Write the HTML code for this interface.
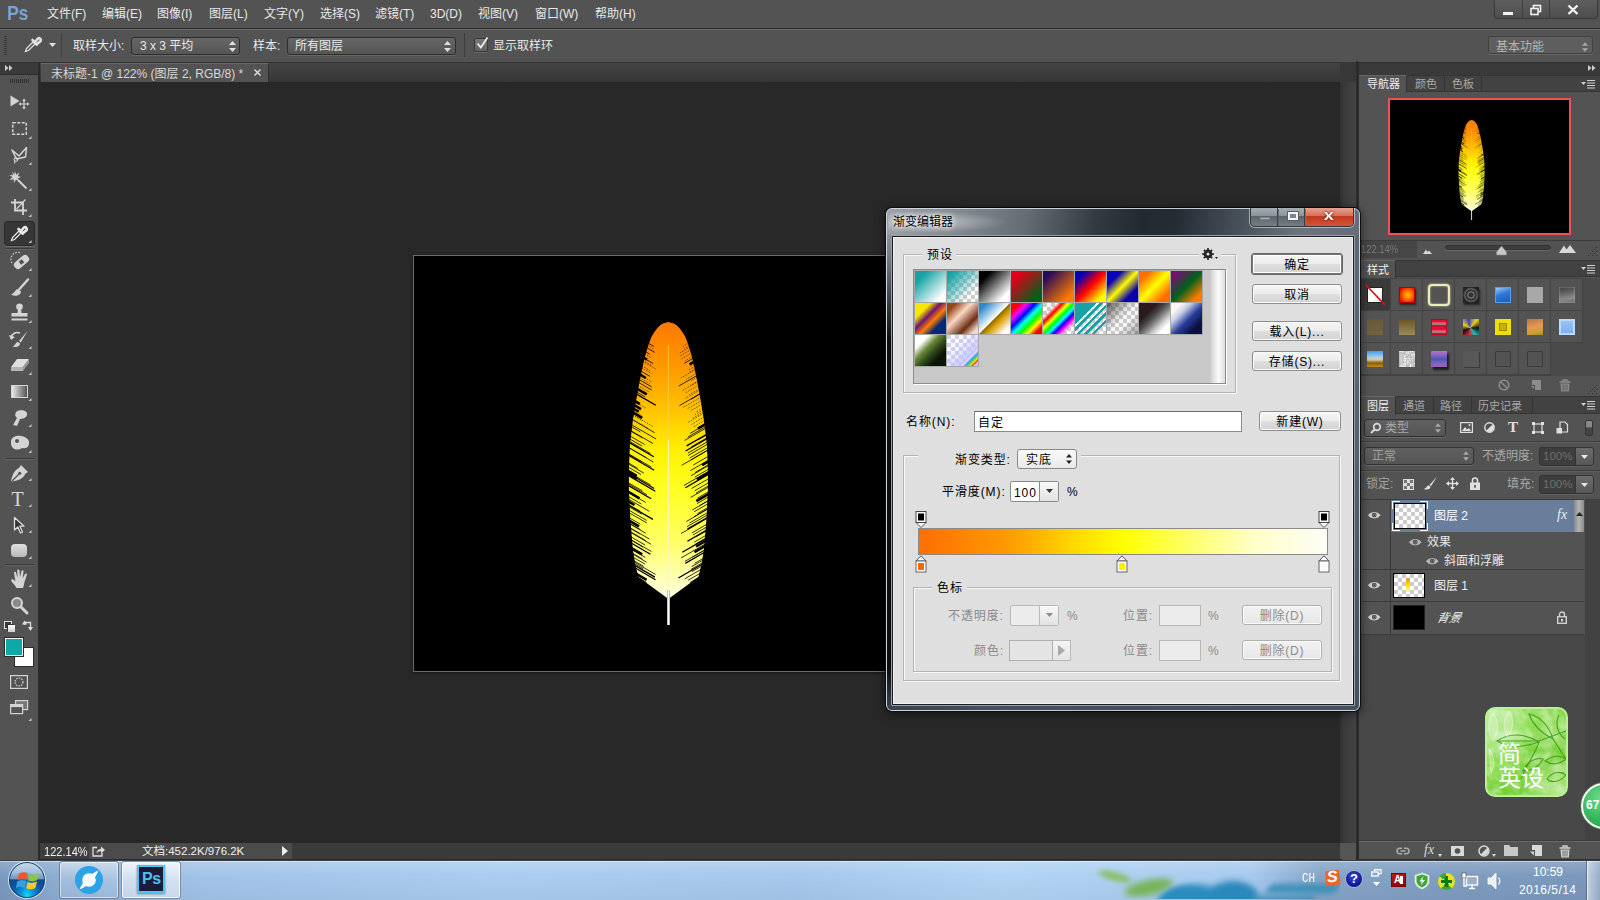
<!DOCTYPE html>
<html lang="zh-CN">
<head>
<meta charset="utf-8">
<title>Photoshop</title>
<style>
*{box-sizing:border-box;margin:0;padding:0}
html,body{width:1600px;height:900px;overflow:hidden;background:#535353}
body{position:relative;font-family:"Liberation Sans","Noto Sans CJK SC",sans-serif;font-size:12px;color:#e4e4e4}
.a{position:absolute}
.t{position:absolute;white-space:nowrap;line-height:1}
svg{position:absolute;overflow:visible}
/* ---------- top ---------- */
#menubar{left:0;top:0;width:1600px;height:29px;background:#535353;border-bottom:1px solid #2c2c2c}
#menubar .t{top:8px;font-size:12px;color:#e8e8e8;letter-spacing:0px}
#optbar{left:0;top:29px;width:1600px;height:34px;background:#535353;box-shadow:inset 0 1px 0 #6c6c6c;border-bottom:1px solid #333}
#tabrow{left:40px;top:63px;width:1302px;height:19px;background:linear-gradient(#444,#363636)}
#canvasbg{left:40px;top:82px;width:1302px;height:761px;background:#282828}
#statusbar{left:40px;top:841px;width:1300px;height:20px;background:#3e3e3e}
#toolbar{left:0;top:62px;width:39px;height:799px;background:#535353}
#rightcol{left:1342px;top:62px;width:258px;height:799px}
#taskbar{left:0;top:860px;width:1600px;height:40px;background:#a9cbee}
.dd{background:linear-gradient(#666,#555);border:1px solid #2e2e2e;border-radius:3px;box-shadow:0 1px 0 rgba(255,255,255,.12)}
.dd2{background:linear-gradient(#606060,#555);border:1px solid #333;border-radius:3px;box-shadow:0 1px 0 rgba(255,255,255,.12)}
.dt{letter-spacing:.9px}

</style>
</head>
<body>
<!-- ===== MENUBAR ===== -->
<div id="menubar" class="a">
<div class="t" style="left:7px;top:3px;font-size:20.5px;font-weight:bold;color:#79a3d3;letter-spacing:-0.5px;transform:scaleX(.87);transform-origin:0 0;font-family:'Liberation Sans',sans-serif">Ps</div>
<div class="t" style="left:47px">文件(F)</div>
<div class="t" style="left:102px">编辑(E)</div>
<div class="t" style="left:157px">图像(I)</div>
<div class="t" style="left:209px">图层(L)</div>
<div class="t" style="left:264px">文字(Y)</div>
<div class="t" style="left:320px">选择(S)</div>
<div class="t" style="left:375px">滤镜(T)</div>
<div class="t" style="left:430px">3D(D)</div>
<div class="t" style="left:478px">视图(V)</div>
<div class="t" style="left:535px">窗口(W)</div>
<div class="t" style="left:595px">帮助(H)</div>
<!-- window buttons -->
<div class="a" style="left:1494px;top:0;width:104px;height:19px;border:1px solid #3a3a3a;border-top:none;border-radius:0 0 4px 4px;background:linear-gradient(#5e5e5e,#4e4e4e)"></div>
<div class="a" style="left:1522px;top:0;width:1px;height:18px;background:#3e3e3e"></div>
<div class="a" style="left:1549px;top:0;width:1px;height:18px;background:#3e3e3e"></div>
<div class="a" style="left:1503px;top:12px;width:10px;height:3px;background:#f2f2f2"></div>
<svg style="left:1530px;top:4px" width="12" height="12" viewBox="0 0 12 12"><rect x="3.5" y="1.5" width="7" height="6" fill="none" stroke="#f2f2f2" stroke-width="1.6"/><rect x="1" y="4.5" width="7" height="6" fill="#555" stroke="#f2f2f2" stroke-width="1.6"/></svg>
<svg style="left:1567px;top:4px" width="12" height="12" viewBox="0 0 12 12"><path d="M1.5 1.5L10.5 10M10.5 1.5L1.5 10" stroke="#f2f2f2" stroke-width="2.4"/></svg>

</div>
<!-- ===== OPTIONS BAR ===== -->
<div id="optbar" class="a">
<!-- grip -->
<div class="a" style="left:4px;top:7px;width:3px;height:20px;background:repeating-linear-gradient(#3a3a3a 0 1px,transparent 1px 2px)"></div>
<!-- eyedropper icon -->
<svg style="left:24px;top:6px" width="18" height="18" viewBox="0 0 18 18"><path d="M1.5 16.5L2.5 13.5L9 7L11 9L4.5 15.5Z" fill="none" stroke="#e0e0e0" stroke-width="1.3"/><path d="M8.5 5L13 9.5M10.5 7.5L14 3.5a1.9 1.9 0 0 1 2.6 2.6L12.5 9.5" stroke="#e0e0e0" stroke-width="2.6" stroke-linecap="round" fill="none"/></svg>
<svg style="left:49px;top:14px" width="7" height="4" viewBox="0 0 7 4"><path d="M0 0H7L3.5 4Z" fill="#e0e0e0"/></svg>
<div class="a" style="left:61px;top:4px;width:1px;height:24px;background:#3e3e3e"></div>
<div class="t" style="left:73px;top:11px;font-size:12px;color:#e8e8e8">取样大小:</div>
<div class="a dd" style="left:131px;top:8px;width:109px;height:18px"></div>
<div class="t" style="left:140px;top:11px;font-size:12px;color:#e8e8e8">3 x 3 平均</div>
<svg style="left:229px;top:12px" width="7" height="11" viewBox="0 0 7 11"><path d="M0 4L3.5 0L7 4ZM0 7L3.5 11L7 7Z" fill="#e0e0e0"/></svg>
<div class="t" style="left:253px;top:11px;font-size:12px;color:#e8e8e8">样本:</div>
<div class="a dd" style="left:287px;top:8px;width:169px;height:18px"></div>
<div class="t" style="left:295px;top:11px;font-size:12px;color:#e8e8e8">所有图层</div>
<svg style="left:444px;top:12px" width="7" height="11" viewBox="0 0 7 11"><path d="M0 4L3.5 0L7 4ZM0 7L3.5 11L7 7Z" fill="#e0e0e0"/></svg>
<div class="a" style="left:464px;top:4px;width:1px;height:24px;background:#3e3e3e"></div>
<div class="a" style="left:474px;top:9px;width:14px;height:14px;background:linear-gradient(#787878,#626262);border:1px solid #383838;border-radius:2px;box-shadow:0 1px 0 rgba(255,255,255,.12)"></div>
<svg style="left:476px;top:7px" width="13" height="14" viewBox="0 0 13 14"><path d="M1.500 7.500L4.800 11.500L11.500 1.500" stroke="#ececec" stroke-width="1.800" fill="none"/></svg>
<div class="t" style="left:493px;top:11px;font-size:12px;color:#e8e8e8">显示取样环</div>
<!-- workspace -->
<div class="a dd" style="left:1488px;top:7px;width:105px;height:18px;background:#5e5e5e;border-color:#414141"></div>
<div class="t" style="left:1496px;top:12px;font-size:12px;color:#b4b4b4">基本功能</div>
<svg style="left:1582px;top:13px" width="6" height="10" viewBox="0 0 7 11"><path d="M0 4L3.5 0L7 4ZM0 7L3.5 11L7 7Z" fill="#a8a8a8"/></svg>

</div>
<!-- ===== TAB ROW ===== -->
<div id="tabrow" class="a">
<div class="a" style="left:1px;top:0;width:228px;height:19px;background:#535353;border-top:1px solid #6a6a6a;border-right:1px solid #303030"></div>
<div class="t" style="left:11px;top:5px;font-size:12px;color:#d8d8d8">未标题-1 @ 122% (图层 2, RGB/8) *</div>
<svg style="left:214px;top:6px" width="7" height="7" viewBox="0 0 7 7"><path d="M0.5 0.5L6.5 6.5M6.5 0.5L0.5 6.5" stroke="#e0e0e0" stroke-width="1.4"/></svg>

</div>
<!-- ===== CANVAS ===== -->
<div id="canvasbg" class="a">
<!-- document -->
<div class="a" style="left:373px;top:173px;width:500px;height:417px;background:#000;border:1px solid #6a6a6a;box-shadow:0 1px 3px rgba(0,0,0,.5)"></div>
<svg style="left:-40px;top:-82px" width="1600" height="900" viewBox="0 0 1600 900">
<defs><linearGradient id="fg" gradientUnits="userSpaceOnUse" x1="0" y1="322" x2="0" y2="600"><stop offset="0" stop-color="#ff7800"/><stop offset="0.15" stop-color="#ff9600"/><stop offset="0.32" stop-color="#ffc400"/><stop offset="0.46" stop-color="#fff000"/><stop offset="0.6" stop-color="#ffff20"/><stop offset="0.78" stop-color="#ffff60"/><stop offset="0.9" stop-color="#ffffa8"/><stop offset="1" stop-color="#ffffe8"/></linearGradient>
<linearGradient id="qg" x1="0" x2="1" y1="0" y2="0"><stop offset="0" stop-color="#a8a898"/><stop offset="0.5" stop-color="#ffffff"/><stop offset="1" stop-color="#989888"/></linearGradient>
<clipPath id="fc"><path d="M668.4 322.0 L668.4 322.0 L673.8 323.5 L676.4 325.0 L677.9 326.5 L679.4 328.0 L680.5 329.5 L681.6 331.0 L682.7 332.5 L683.6 334.0 L684.5 335.5 L685.4 337.0 L686.0 338.5 L686.5 340.0 L687.1 341.5 L687.6 343.0 L688.2 344.5 L688.7 346.0 L689.1 347.5 L689.6 349.0 L690.0 350.5 L690.5 352.0 L690.9 353.5 L691.4 355.0 L691.8 356.5 L692.1 358.0 L692.5 359.5 L692.9 361.0 L693.3 362.5 L693.6 364.0 L693.9 365.5 L694.2 367.0 L694.5 368.5 L694.8 370.0 L695.1 371.5 L695.5 373.0 L695.8 374.5 L696.1 376.0 L696.4 377.5 L696.7 379.0 L697.0 380.5 L697.3 382.0 L697.5 383.5 L697.8 385.0 L698.1 386.5 L698.4 388.0 L698.6 389.5 L698.9 391.0 L699.2 392.5 L699.5 394.0 L699.8 395.5 L700.0 397.0 L700.3 398.5 L700.6 400.0 L700.8 401.5 L701.1 403.0 L701.3 404.5 L701.6 406.0 L701.8 407.5 L702.1 409.0 L702.3 410.5 L702.6 412.0 L702.8 413.5 L703.1 415.0 L703.3 416.5 L703.6 418.0 L703.8 419.5 L704.0 421.0 L704.2 422.5 L704.4 424.0 L704.6 425.5 L704.7 427.0 L704.9 428.5 L705.1 430.0 L705.3 431.5 L705.5 433.0 L705.6 434.5 L705.8 436.0 L706.0 437.5 L706.2 439.0 L706.4 440.5 L706.5 442.0 L706.7 443.5 L706.9 445.0 L707.0 446.5 L707.0 448.0 L707.1 449.5 L707.1 451.0 L707.2 452.5 L707.3 454.0 L707.3 455.5 L707.4 457.0 L707.4 458.5 L707.5 460.0 L707.6 461.5 L707.6 463.0 L707.7 464.5 L707.7 466.0 L707.8 467.5 L707.9 469.0 L707.9 470.5 L707.9 472.0 L707.9 473.5 L707.9 475.0 L707.9 476.5 L707.9 478.0 L707.9 479.5 L707.9 481.0 L707.9 482.5 L707.9 484.0 L707.9 485.5 L707.9 487.0 L707.9 488.5 L707.9 490.0 L707.8 491.5 L707.8 493.0 L707.7 494.5 L707.6 496.0 L707.5 497.5 L707.4 499.0 L707.4 500.5 L707.3 502.0 L707.2 503.5 L707.1 505.0 L707.1 506.5 L707.0 508.0 L706.9 509.5 L706.9 511.0 L706.8 512.5 L706.7 514.0 L706.6 515.5 L706.5 517.0 L706.5 518.5 L706.4 520.0 L706.3 521.5 L706.1 523.0 L706.0 524.5 L705.9 526.0 L705.8 527.5 L705.6 529.0 L705.5 530.5 L705.4 532.0 L705.3 533.5 L705.1 535.0 L705.0 536.5 L704.9 538.0 L704.8 539.5 L704.6 541.0 L704.5 542.5 L704.4 544.0 L704.3 545.5 L704.1 547.0 L704.0 548.5 L703.9 550.0 L703.6 551.5 L703.4 553.0 L703.1 554.5 L702.9 556.0 L702.6 557.5 L702.4 559.0 L702.1 560.5 L701.9 562.0 L701.6 563.5 L701.4 565.0 L701.0 566.5 L700.6 568.0 L700.3 569.5 L699.9 571.0 L699.5 572.5 L699.1 574.0 L698.8 575.5 L698.4 577.0 L669.7 598.0 L667.1 598.0 L638.4 577.0 L638.0 575.5 L637.6 574.0 L637.3 572.5 L636.9 571.0 L636.5 569.5 L636.1 568.0 L635.8 566.5 L635.4 565.0 L635.1 563.5 L634.9 562.0 L634.6 560.5 L634.4 559.0 L634.1 557.5 L633.9 556.0 L633.6 554.5 L633.4 553.0 L633.1 551.5 L632.9 550.0 L632.8 548.5 L632.6 547.0 L632.5 545.5 L632.4 544.0 L632.3 542.5 L632.1 541.0 L632.0 539.5 L631.9 538.0 L631.8 536.5 L631.6 535.0 L631.5 533.5 L631.4 532.0 L631.3 530.5 L631.1 529.0 L631.0 527.5 L630.9 526.0 L630.8 524.5 L630.6 523.0 L630.5 521.5 L630.4 520.0 L630.3 518.5 L630.2 517.0 L630.2 515.5 L630.1 514.0 L630.0 512.5 L629.9 511.0 L629.9 509.5 L629.8 508.0 L629.7 506.5 L629.6 505.0 L629.6 503.5 L629.5 502.0 L629.4 500.5 L629.4 499.0 L629.3 497.5 L629.2 496.0 L629.1 494.5 L629.0 493.0 L629.0 491.5 L628.9 490.0 L628.9 488.5 L628.9 487.0 L628.9 485.5 L628.9 484.0 L628.9 482.5 L628.9 481.0 L628.9 479.5 L628.9 478.0 L628.9 476.5 L628.9 475.0 L628.9 473.5 L628.9 472.0 L628.9 470.5 L628.9 469.0 L629.0 467.5 L629.1 466.0 L629.1 464.5 L629.2 463.0 L629.2 461.5 L629.3 460.0 L629.4 458.5 L629.4 457.0 L629.5 455.5 L629.5 454.0 L629.6 452.5 L629.7 451.0 L629.7 449.5 L629.8 448.0 L629.8 446.5 L629.9 445.0 L630.1 443.5 L630.3 442.0 L630.4 440.5 L630.6 439.0 L630.8 437.5 L631.0 436.0 L631.2 434.5 L631.3 433.0 L631.5 431.5 L631.7 430.0 L631.9 428.5 L632.1 427.0 L632.2 425.5 L632.4 424.0 L632.6 422.5 L632.8 421.0 L633.0 419.5 L633.2 418.0 L633.5 416.5 L633.7 415.0 L634.0 413.5 L634.2 412.0 L634.5 410.5 L634.7 409.0 L635.0 407.5 L635.2 406.0 L635.5 404.5 L635.7 403.0 L636.0 401.5 L636.2 400.0 L636.5 398.5 L636.8 397.0 L637.0 395.5 L637.3 394.0 L637.6 392.5 L637.9 391.0 L638.1 389.5 L638.4 388.0 L638.7 386.5 L639.0 385.0 L639.3 383.5 L639.5 382.0 L639.8 380.5 L640.1 379.0 L640.4 377.5 L640.7 376.0 L641.0 374.5 L641.3 373.0 L641.6 371.5 L642.0 370.0 L642.3 368.5 L642.6 367.0 L642.9 365.5 L643.2 364.0 L643.5 362.5 L643.9 361.0 L644.3 359.5 L644.6 358.0 L645.0 356.5 L645.4 355.0 L645.9 353.5 L646.3 352.0 L646.8 350.5 L647.2 349.0 L647.6 347.5 L648.1 346.0 L648.6 344.5 L649.1 343.0 L649.7 341.5 L650.3 340.0 L650.8 338.5 L651.4 337.0 L652.3 335.5 L653.2 334.0 L654.1 332.5 L655.1 331.0 L656.3 329.5 L657.4 328.0 L658.9 326.5 L660.4 325.0 L663.0 323.5 L668.4 322.0Z"/></clipPath></defs>
<g id="fthr"><path d="M668.4 322.0 L668.4 322.0 L673.8 323.5 L676.4 325.0 L677.9 326.5 L679.4 328.0 L680.5 329.5 L681.6 331.0 L682.7 332.5 L683.6 334.0 L684.5 335.5 L685.4 337.0 L686.0 338.5 L686.5 340.0 L687.1 341.5 L687.6 343.0 L688.2 344.5 L688.7 346.0 L689.1 347.5 L689.6 349.0 L690.0 350.5 L690.5 352.0 L690.9 353.5 L691.4 355.0 L691.8 356.5 L692.1 358.0 L692.5 359.5 L692.9 361.0 L693.3 362.5 L693.6 364.0 L693.9 365.5 L694.2 367.0 L694.5 368.5 L694.8 370.0 L695.1 371.5 L695.5 373.0 L695.8 374.5 L696.1 376.0 L696.4 377.5 L696.7 379.0 L697.0 380.5 L697.3 382.0 L697.5 383.5 L697.8 385.0 L698.1 386.5 L698.4 388.0 L698.6 389.5 L698.9 391.0 L699.2 392.5 L699.5 394.0 L699.8 395.5 L700.0 397.0 L700.3 398.5 L700.6 400.0 L700.8 401.5 L701.1 403.0 L701.3 404.5 L701.6 406.0 L701.8 407.5 L702.1 409.0 L702.3 410.5 L702.6 412.0 L702.8 413.5 L703.1 415.0 L703.3 416.5 L703.6 418.0 L703.8 419.5 L704.0 421.0 L704.2 422.5 L704.4 424.0 L704.6 425.5 L704.7 427.0 L704.9 428.5 L705.1 430.0 L705.3 431.5 L705.5 433.0 L705.6 434.5 L705.8 436.0 L706.0 437.5 L706.2 439.0 L706.4 440.5 L706.5 442.0 L706.7 443.5 L706.9 445.0 L707.0 446.5 L707.0 448.0 L707.1 449.5 L707.1 451.0 L707.2 452.5 L707.3 454.0 L707.3 455.5 L707.4 457.0 L707.4 458.5 L707.5 460.0 L707.6 461.5 L707.6 463.0 L707.7 464.5 L707.7 466.0 L707.8 467.5 L707.9 469.0 L707.9 470.5 L707.9 472.0 L707.9 473.5 L707.9 475.0 L707.9 476.5 L707.9 478.0 L707.9 479.5 L707.9 481.0 L707.9 482.5 L707.9 484.0 L707.9 485.5 L707.9 487.0 L707.9 488.5 L707.9 490.0 L707.8 491.5 L707.8 493.0 L707.7 494.5 L707.6 496.0 L707.5 497.5 L707.4 499.0 L707.4 500.5 L707.3 502.0 L707.2 503.5 L707.1 505.0 L707.1 506.5 L707.0 508.0 L706.9 509.5 L706.9 511.0 L706.8 512.5 L706.7 514.0 L706.6 515.5 L706.5 517.0 L706.5 518.5 L706.4 520.0 L706.3 521.5 L706.1 523.0 L706.0 524.5 L705.9 526.0 L705.8 527.5 L705.6 529.0 L705.5 530.5 L705.4 532.0 L705.3 533.5 L705.1 535.0 L705.0 536.5 L704.9 538.0 L704.8 539.5 L704.6 541.0 L704.5 542.5 L704.4 544.0 L704.3 545.5 L704.1 547.0 L704.0 548.5 L703.9 550.0 L703.6 551.5 L703.4 553.0 L703.1 554.5 L702.9 556.0 L702.6 557.5 L702.4 559.0 L702.1 560.5 L701.9 562.0 L701.6 563.5 L701.4 565.0 L701.0 566.5 L700.6 568.0 L700.3 569.5 L699.9 571.0 L699.5 572.5 L699.1 574.0 L698.8 575.5 L698.4 577.0 L669.7 598.0 L667.1 598.0 L638.4 577.0 L638.0 575.5 L637.6 574.0 L637.3 572.5 L636.9 571.0 L636.5 569.5 L636.1 568.0 L635.8 566.5 L635.4 565.0 L635.1 563.5 L634.9 562.0 L634.6 560.5 L634.4 559.0 L634.1 557.5 L633.9 556.0 L633.6 554.5 L633.4 553.0 L633.1 551.5 L632.9 550.0 L632.8 548.5 L632.6 547.0 L632.5 545.5 L632.4 544.0 L632.3 542.5 L632.1 541.0 L632.0 539.5 L631.9 538.0 L631.8 536.5 L631.6 535.0 L631.5 533.5 L631.4 532.0 L631.3 530.5 L631.1 529.0 L631.0 527.5 L630.9 526.0 L630.8 524.5 L630.6 523.0 L630.5 521.5 L630.4 520.0 L630.3 518.5 L630.2 517.0 L630.2 515.5 L630.1 514.0 L630.0 512.5 L629.9 511.0 L629.9 509.5 L629.8 508.0 L629.7 506.5 L629.6 505.0 L629.6 503.5 L629.5 502.0 L629.4 500.5 L629.4 499.0 L629.3 497.5 L629.2 496.0 L629.1 494.5 L629.0 493.0 L629.0 491.5 L628.9 490.0 L628.9 488.5 L628.9 487.0 L628.9 485.5 L628.9 484.0 L628.9 482.5 L628.9 481.0 L628.9 479.5 L628.9 478.0 L628.9 476.5 L628.9 475.0 L628.9 473.5 L628.9 472.0 L628.9 470.5 L628.9 469.0 L629.0 467.5 L629.1 466.0 L629.1 464.5 L629.2 463.0 L629.2 461.5 L629.3 460.0 L629.4 458.5 L629.4 457.0 L629.5 455.5 L629.5 454.0 L629.6 452.5 L629.7 451.0 L629.7 449.5 L629.8 448.0 L629.8 446.5 L629.9 445.0 L630.1 443.5 L630.3 442.0 L630.4 440.5 L630.6 439.0 L630.8 437.5 L631.0 436.0 L631.2 434.5 L631.3 433.0 L631.5 431.5 L631.7 430.0 L631.9 428.5 L632.1 427.0 L632.2 425.5 L632.4 424.0 L632.6 422.5 L632.8 421.0 L633.0 419.5 L633.2 418.0 L633.5 416.5 L633.7 415.0 L634.0 413.5 L634.2 412.0 L634.5 410.5 L634.7 409.0 L635.0 407.5 L635.2 406.0 L635.5 404.5 L635.7 403.0 L636.0 401.5 L636.2 400.0 L636.5 398.5 L636.8 397.0 L637.0 395.5 L637.3 394.0 L637.6 392.5 L637.9 391.0 L638.1 389.5 L638.4 388.0 L638.7 386.5 L639.0 385.0 L639.3 383.5 L639.5 382.0 L639.8 380.5 L640.1 379.0 L640.4 377.5 L640.7 376.0 L641.0 374.5 L641.3 373.0 L641.6 371.5 L642.0 370.0 L642.3 368.5 L642.6 367.0 L642.9 365.5 L643.2 364.0 L643.5 362.5 L643.9 361.0 L644.3 359.5 L644.6 358.0 L645.0 356.5 L645.4 355.0 L645.9 353.5 L646.3 352.0 L646.8 350.5 L647.2 349.0 L647.6 347.5 L648.1 346.0 L648.6 344.5 L649.1 343.0 L649.7 341.5 L650.3 340.0 L650.8 338.5 L651.4 337.0 L652.3 335.5 L653.2 334.0 L654.1 332.5 L655.1 331.0 L656.3 329.5 L657.4 328.0 L658.9 326.5 L660.4 325.0 L663.0 323.5 L668.4 322.0Z" fill="url(#fg)"/>
<path d="M645.4 341.5L653.8 346.4M643.8 346.0L654.7 352.4M642.9 350.3L649.7 354.2M640.9 356.4L653.2 363.6M695.9 356.6L684.3 363.4M638.1 369.4L650.2 376.5M700.1 373.7L678.7 386.1M636.2 377.9L651.7 386.9M635.7 380.8L651.7 390.1M634.2 390.5L645.1 396.8M703.0 392.4L690.8 399.4M703.6 391.6L679.3 405.7M629.1 417.8L654.7 432.7M628.8 425.1L640.3 431.8M708.0 423.0L690.0 433.5M628.4 422.9L656.1 439.0M708.4 425.1L687.8 437.1M628.1 429.6L642.4 437.9M708.7 426.5L684.7 440.4M627.8 428.9L653.1 443.6M709.0 433.6L698.2 439.8M627.4 434.5L644.7 444.5M627.1 437.4L642.1 446.1M709.7 436.3L691.1 447.1M626.9 441.1L638.0 447.5M626.8 439.8L650.4 453.5M710.0 440.2L687.9 453.1M710.1 442.7L688.1 455.5M626.6 446.3L646.5 457.8M710.2 446.1L689.8 458.0M626.5 446.4L653.3 462.0M710.3 448.6L690.5 460.2M626.4 453.0L641.6 461.8M710.4 448.7L681.7 465.3M626.2 452.5L651.4 467.1M710.6 455.0L693.3 465.0M626.1 461.6L637.8 468.4M710.7 458.8L690.3 470.7M625.9 462.6L643.9 473.1M710.9 463.3L695.0 472.5M625.9 465.8L641.0 474.5M710.9 464.2L690.9 475.8M710.9 467.8L694.7 477.2M625.9 470.6L650.7 485.0M710.9 469.9L683.9 485.5M710.9 477.4L691.6 488.5M625.9 481.3L642.5 490.9M710.9 481.4L694.7 490.8M625.9 482.5L646.9 494.7M710.9 484.5L696.0 493.1M710.8 485.8L690.7 497.4M710.6 490.5L697.4 498.2M626.3 491.2L645.9 502.5M626.4 495.3L641.3 504.0M710.4 495.8L697.0 503.6M710.2 499.4L699.3 505.8M626.7 498.2L649.3 511.3M710.1 499.7L692.3 510.0M626.8 503.5L640.0 511.1M710.0 502.6L694.1 511.8M627.0 505.6L641.6 514.1M709.8 506.4L697.6 513.5M709.7 507.6L693.9 516.8M627.2 509.2L646.6 520.4M709.6 508.0L686.4 521.5M627.3 511.7L646.7 522.9M709.5 511.5L689.4 523.1M627.5 516.8L640.4 524.2M709.3 513.8L687.0 526.7M628.0 522.3L640.4 529.5M708.8 517.5L681.1 533.5M628.2 523.0L645.7 533.2M708.6 523.2L691.8 533.0M628.4 527.3L639.8 533.9M708.4 526.0L692.9 535.0M628.6 527.0L649.4 539.0M708.2 529.8L696.3 536.7M628.8 530.7L645.3 540.3M629.0 531.5L651.1 544.3M707.8 534.3L694.3 542.1M629.2 535.9L645.2 545.1M707.6 537.1L695.5 544.1M629.4 539.2L643.0 547.1M629.6 538.9L651.4 551.5M706.6 543.2L681.1 557.9M630.6 548.9L645.3 557.4M706.2 549.2L692.5 557.2M631.0 552.3L642.5 559.0M705.8 549.3L684.9 561.4M631.4 553.3L646.6 562.2M631.8 556.5L644.9 564.1M705.0 557.4L694.6 563.4M632.3 559.7L643.6 566.3M704.5 559.2L691.6 566.7M632.9 562.7L643.2 568.7M703.9 561.9L690.8 569.5M633.5 561.6L655.6 574.5M703.3 565.1L691.9 571.7M701.9 568.9L684.8 578.8M701.4 572.6L687.9 580.4M635.4 575.9L646.5 582.3M701.4 575.8L690.1 582.4M635.4 578.6L646.4 585.0" stroke="#000" stroke-width="0.8" fill="none"/>
<path d="M633.2 392.1L655.8 405.2M709.4 432.7L686.6 445.9M709.9 436.9L685.6 451.0M626.7 441.1L653.8 456.8M626.2 454.0L654.2 470.2M625.9 472.0L654.2 488.5M710.9 472.9L685.4 487.7M625.9 474.1L655.3 491.2M626.0 484.1L651.2 498.7M627.1 504.4L652.9 519.4M709.0 516.5L687.4 529.1M708.0 529.4L687.4 541.3M707.2 537.9L682.3 552.3M629.9 542.3L650.4 554.2M705.4 551.8L685.3 563.4M634.3 565.1L654.9 577.1M702.5 564.0L678.4 578.0M634.9 567.7L655.5 579.7" stroke="#000" stroke-width="1.3" fill="none"/>
<path d="M641.4 356.3L647.0 359.6M696.5 360.4L689.6 364.3M637.6 373.2L645.8 378.0M634.7 387.4L646.8 394.4M632.7 399.9L639.8 404.0M632.0 403.9L641.0 409.2M631.5 407.5L638.7 411.7M630.6 411.1L642.2 417.8M707.7 422.9L697.8 428.6M710.6 460.2L702.1 465.2M625.9 469.6L636.7 475.8M625.9 472.3L637.0 478.7M710.9 471.3L696.8 479.5M626.2 490.5L639.5 498.3M710.5 492.9L696.3 501.1M626.6 500.4L634.5 505.0M627.8 519.9L639.0 526.4M707.4 539.9L696.1 546.5M706.9 544.9L694.5 552.1M630.2 547.5L642.2 554.4M635.4 573.3L646.6 579.8M701.4 578.9L691.2 584.8" stroke="#000" stroke-width="2.6" fill="none"/>
<path d="M691.4 341.6L683.2 346.4M644.7 343.7L653.6 348.9M692.1 344.2L684.5 348.6M693.0 345.3L679.8 353.0M693.9 347.9L679.6 356.2M642.1 352.3L651.8 358.0M694.7 351.2L681.4 358.9M695.4 354.8L684.9 360.8M640.3 358.8L651.9 365.6M639.9 359.8L655.7 368.9M696.9 362.5L689.8 366.7M639.2 364.4L650.1 370.7M697.6 364.7L687.8 370.4M638.8 366.2L651.3 373.5M698.0 367.2L688.7 372.6M698.7 367.6L680.9 378.0M699.2 371.7L686.3 379.2M637.1 373.5L652.0 382.2M699.7 375.5L691.0 380.6M636.7 376.3L649.9 383.9M700.6 379.6L690.4 385.5M701.1 379.8L681.9 390.9M635.2 383.9L649.8 392.4M701.6 383.5L685.7 392.7M702.1 387.1L689.3 394.6M702.6 388.4L685.1 398.6M633.8 392.3L646.0 399.4M704.1 395.4L682.7 407.7M632.4 400.2L645.7 408.0M704.4 399.0L687.1 409.0M704.8 402.5L691.2 410.4M705.3 406.6L695.4 412.4M631.1 409.0L641.5 415.1M705.7 408.5L693.7 415.5M706.2 410.4L692.2 418.5M630.2 413.4L643.0 420.8M706.6 411.6L688.1 422.3M629.8 413.0L652.8 426.4M707.0 415.4L691.5 424.4M629.4 417.3L648.0 428.1M707.4 418.8L693.5 426.9" stroke="#000" stroke-width="0.9" stroke-dasharray="1.6 1.2" opacity="0.6" fill="none"/>
<path d="M668.4 345L668.4 598" stroke="#ffd84a" stroke-width="0.9" opacity="0.75"/>
<path d="M668.4 440L668.4 598" stroke="#fffbd0" stroke-width="1.2" opacity="0.8"/>
<rect x="667.0" y="590" width="3" height="35" fill="url(#qg)"/>
</g></svg>
<!-- right scroll gutter -->
<div class="a" style="left:1300px;top:0;width:16px;height:761px;background:linear-gradient(90deg,#303030,#3a3a3a 25%,#434343)"></div>
<div class="a" style="left:1300px;top:-20px;width:16px;height:20px;background:#383838"></div>
<div class="a" style="left:1300px;top:761px;width:16px;height:16px;background:#555"></div>
<div class="a" style="left:1316px;top:-21px;width:2px;height:800px;background:#2b2b2b"></div>

</div>
<div id="statusbar" class="a">
<div class="a" style="left:0;top:0;width:1300px;height:2px;background:#282828"></div>
<div class="a" style="left:0;top:2px;width:49px;height:16px;background:#3e3e3e"></div>
<div class="a" style="left:49px;top:2px;width:203px;height:16px;background:#4b4b4b"></div>
<div class="a" style="left:252px;top:2px;width:1048px;height:16px;background:#3a3a3a"></div>
<div class="a" style="left:0;top:18px;width:1302px;height:2px;background:#2a2a2a"></div>
<div class="t" style="left:4px;top:5px;font-size:12px;transform:scaleX(.92);transform-origin:0 0;color:#f0f0f0">122.14%</div>
<svg style="left:52px;top:4px" width="14" height="12" viewBox="0 0 14 12"><path d="M5 2.5H1V11H10V8" fill="none" stroke="#ddd" stroke-width="1.3"/><path d="M4.5 8.5C4.5 5.5 6.5 4 9 4V1.5L13 5L9 8.5V6.2C7 6.2 5.5 6.8 4.5 8.5Z" fill="#ddd"/></svg>
<div class="t" style="left:102px;top:5px;font-size:11.5px;color:#f0f0f0">文档:452.2K/976.2K</div>
<svg style="left:242px;top:5px" width="6" height="10" viewBox="0 0 6 10"><path d="M0 0L6 5L0 10Z" fill="#eee"/></svg>

</div>
<!-- ===== TOOLBAR ===== -->
<div id="toolbar" class="a">
<!-- header -->
<div class="a" style="left:0;top:0;width:38px;height:13px;background:#3a3a3a;border-top:1px solid #333;border-bottom:1px solid #2e2e2e"></div>
<svg style="left:5px;top:3px" width="8" height="6" viewBox="0 0 8 6"><path d="M0 0L3.5 3L0 6ZM4 0L7.5 3L4 6Z" fill="#cfcfcf"/></svg>
<div class="a" style="left:10px;top:17px;width:19px;height:4px;background:repeating-linear-gradient(90deg,#303030 0 1px,transparent 1px 2px)"></div>
<div class="a" style="left:38px;top:0;width:2px;height:799px;background:#2b2b2b"></div>
<!-- selected tool -->
<div class="a" style="left:4px;top:159px;width:31px;height:25px;background:#363636;border:1px solid #2a2a2a;border-radius:3px;box-shadow:0 1px 0 rgba(255,255,255,.15)"></div>
<!-- separators -->
<div class="a" style="left:5px;top:186px;width:29px;height:1px;background:#3a3a3a;box-shadow:0 1px 0 #626262"></div>
<div class="a" style="left:5px;top:396px;width:29px;height:1px;background:#3a3a3a;box-shadow:0 1px 0 #626262"></div>
<div class="a" style="left:5px;top:502px;width:29px;height:1px;background:#3a3a3a;box-shadow:0 1px 0 #626262"></div>
<!-- move -->
<svg style="left:10px;top:33px" width="20" height="16" viewBox="0 0 20 16"><path d="M0.500 0.500V11.500L9.500 6Z" fill="#d4d4d4"/><path d="M14 5V13M10 9H18" stroke="#d4d4d4" stroke-width="1.200"/><path d="M14 3.500L12.200 6H15.800ZM14 14.500L12.200 12H15.800ZM8.500 9L11 7.200V10.800ZM19.500 9L17 7.200V10.800Z" fill="#d4d4d4"/></svg>
<!-- marquee -->
<svg style="left:12px;top:60px" width="15" height="13" viewBox="0 0 15 13"><rect x="0.75" y="0.75" width="13.5" height="11.5" fill="none" stroke="#d4d4d4" stroke-width="1.5" stroke-dasharray="3 1.5"/></svg>
<!-- lasso -->
<svg style="left:10px;top:84px" width="20" height="18" viewBox="0 0 20 18"><path d="M2 4L9 10L16.500 1.500L15.500 11L6.500 13Z" fill="none" stroke="#d4d4d4" stroke-width="1.500" stroke-linejoin="round"/><circle cx="6" cy="13.500" r="1.800" fill="none" stroke="#d4d4d4" stroke-width="1.100"/><path d="M5 15L4.500 17.500" stroke="#d4d4d4" stroke-width="1.100"/></svg>
<!-- wand -->
<svg style="left:9px;top:109px" width="20" height="19" viewBox="0 0 20 19"><path d="M9 9L17.500 17.500" stroke="#d4d4d4" stroke-width="2"/><path d="M6 0L7.200 3.800L10.500 1.500L8.800 5L12 6L8.800 7.200L10 10.500L7 8.500L5 12L4.800 8.200L0.500 9L3.500 6.200L0.500 4L4.200 4.200L3 0.800L5.500 3.500Z" fill="#d4d4d4"/></svg>
<!-- crop -->
<svg style="left:11px;top:137px" width="16" height="16" viewBox="0 0 16 16"><path d="M4 0V11.500H16M0 3.500H12V16" fill="none" stroke="#d4d4d4" stroke-width="1.800"/><path d="M5.500 10L14.500 0.500" stroke="#d4d4d4" stroke-width="1.100"/></svg>
<!-- eyedropper -->
<svg style="left:10px;top:162px" width="18" height="18" viewBox="0 0 18 18"><path d="M1.5 16.5L2.5 13.5L9 7L11 9L4.5 15.5Z" fill="none" stroke="#e8e8e8" stroke-width="1.3"/><path d="M8.5 5L13 9.5M10.5 7.5L14 3.5a1.9 1.9 0 0 1 2.6 2.6L12.5 9.5" stroke="#e8e8e8" stroke-width="2.6" stroke-linecap="round" fill="none"/></svg>
<!-- healing -->
<svg style="left:9px;top:188px" width="22" height="20" viewBox="0 0 22 20"><path d="M3 13A7 7 0 0 1 12 3" fill="none" stroke="#d4d4d4" stroke-width="1.2" stroke-dasharray="1.5 1.5"/><rect x="4" y="8" width="17" height="8" rx="3.5" fill="#d4d4d4" transform="rotate(-40 12.5 12)"/><rect x="10.5" y="10" width="4" height="4" fill="#535353" transform="rotate(-40 12.5 12)"/></svg>
<!-- brush -->
<svg style="left:10px;top:216px" width="20" height="20" viewBox="0 0 20 20"><path d="M18 1.500L9.500 11" stroke="#d4d4d4" stroke-width="2.400" stroke-linecap="round"/><path d="M8 11C5 11 5.500 15 1 16.500C5 19 11 17.500 11 13.500Z" fill="#d4d4d4"/></svg>
<!-- stamp -->
<svg style="left:10px;top:241px" width="19" height="19" viewBox="0 0 19 19"><circle cx="9.500" cy="3.800" r="3.300" fill="#d4d4d4"/><path d="M8 6H11L11.500 10H17.500V13.500H1.500V10H7.500Z" fill="#d4d4d4"/><rect x="1.500" y="15.500" width="16" height="2" fill="#d4d4d4"/></svg>
<!-- history brush -->
<svg style="left:9px;top:268px" width="21" height="20" viewBox="0 0 21 20"><path d="M18.5 1L10 11L11.8 12.5Z" fill="#d4d4d4"/><path d="M9 12C6.5 12 7 15 3.5 16.5C7.5 18 11 16.5 11 13.5Z" fill="#d4d4d4"/><path d="M2 8A6.5 6.5 0 0 1 11 3" fill="none" stroke="#d4d4d4" stroke-width="1.6"/><path d="M0 5L2 10L6 7Z" fill="#d4d4d4"/></svg>
<!-- eraser -->
<svg style="left:10px;top:295px" width="20" height="16" viewBox="0 0 20 16"><path d="M7 2H19L13 10H1Z" fill="#e0e0e0"/><path d="M1 10H13V14H1Z" fill="#b4b4b4"/><path d="M13 10L19 2V6L13 14Z" fill="#9a9a9a"/></svg>
<!-- gradient -->
<div class="a" style="left:11px;top:323px;width:17px;height:13px;border:1px solid #d4d4d4;background:linear-gradient(90deg,#e8e8e8,#555)"></div>
<!-- smudge/blur (finger) -->
<svg style="left:10px;top:346px" width="20" height="19" viewBox="0 0 20 19"><path d="M3 17L7 10C4 8 5 3 9 2.5C13 1.5 18 3 17 7C16.5 10 12 11 10 11L7 18Z" fill="#d4d4d4"/></svg>
<!-- sponge/dodge -->
<svg style="left:9px;top:372px" width="22" height="17" viewBox="0 0 22 17"><path d="M2 8C2 3 7 1 12 2C17 2.5 21 6 20 10C19.5 14 16 15 13 14C10 16 6 16 4 14C2 12.5 2 10 2 8Z" fill="#d4d4d4"/><circle cx="8" cy="7" r="2" fill="#535353"/></svg>
<!-- pen -->
<svg style="left:10px;top:402px" width="19" height="19" viewBox="0 0 19 19"><path d="M11 1L18 8L15 10C14 14 9 16.5 2 17.5L1 17C2.5 10 5 5.5 9 4Z" fill="#d4d4d4"/><path d="M2 17L9 10" stroke="#535353" stroke-width="1.2"/><circle cx="9.7" cy="9.3" r="1.6" fill="#535353"/></svg>
<!-- T -->
<div class="t" style="left:11.500px;top:427px;font-family:'Liberation Serif',serif;font-size:20px;color:#d8d8d8">T</div>
<!-- path select -->
<svg style="left:13px;top:454px" width="13" height="19" viewBox="0 0 13 19"><path d="M1.500 1.500V14L4.800 11L7.500 17L9.500 16L6.800 10.200H11Z" fill="#333" stroke="#dcdcdc" stroke-width="1.300" stroke-linejoin="round"/></svg>
<!-- shape -->
<div class="a" style="left:11px;top:482px;width:16px;height:13px;border-radius:4px;background:linear-gradient(#e0e0e0,#b8b8b8)"></div>
<!-- hand -->
<svg style="left:10px;top:506px" width="20" height="21" viewBox="0 0 20 21"><path d="M6.500 20C5 17 1.500 14.500 1 12C2 10.500 4 11.500 5.500 13.500L4 5C3.800 3.500 5.600 3.200 6 4.600L7.500 10L7.300 2.500C7.300 1 9.300 1 9.500 2.500L10 9.500L11.500 3C11.800 1.600 13.700 2 13.500 3.500L12.600 10.500L15 6C15.700 4.800 17.300 5.600 16.800 7L14.500 14C14 17 13.500 18.500 13 20Z" fill="#d4d4d4"/></svg>
<!-- zoom -->
<svg style="left:10px;top:534px" width="19" height="19" viewBox="0 0 19 19"><circle cx="7" cy="7" r="5" fill="#8a8a8a" stroke="#d4d4d4" stroke-width="2"/><path d="M11 11L17 17" stroke="#d4d4d4" stroke-width="3" stroke-linecap="round"/></svg>
<!-- small corner triangles -->
<svg style="left:0;top:0" width="39" height="700" viewBox="0 0 39 700"><g fill="#c8c8c8"><path d="M31.5 77V74L28.500 77Z M31.5 103V100L28.500 103Z M31.5 129V126L28.500 129Z M31.5 155V152L28.500 155Z M31.5 181V178L28.500 181Z M31.5 209V206L28.500 209Z M31.5 235V232L28.500 235Z M31.5 261V258L28.500 261Z M31.5 287V284L28.500 287Z M31.5 313V310L28.500 313Z M31.5 339V336L28.500 339Z M31.5 365V362L28.500 365Z M31.5 391V388L28.500 391Z M31.5 419V416L28.500 419Z M31.5 445V442L28.500 445Z M31.5 471V468L28.500 471Z M31.5 497V494L28.500 497Z M31.5 525V522L28.500 525Z M31.5 659V656L28.500 659Z"/></g></svg>
<!-- default/swap colors -->
<div class="a" style="left:4px;top:559px;width:8px;height:8px;background:#3a3a3a;border:1.500px solid #ddd"></div>
<div class="a" style="left:8px;top:563px;width:7px;height:7px;background:linear-gradient(#fff,#ccc);box-shadow:-1px -1px 0 #333"></div>
<svg style="left:22px;top:558px" width="11" height="11" viewBox="0 0 11 11"><path d="M2.5 5V2.5H8.5V8" fill="none" stroke="#ddd" stroke-width="1.3"/><path d="M0 4.5L2.5 0.5L5 4.5ZM6 7L8.5 11L11 7Z" fill="#ddd"/></svg>
<!-- fg/bg -->
<div class="a" style="left:14px;top:585px;width:20px;height:20px;background:#fff;border:1px solid #2a2a2a"></div>
<div class="a" style="left:5px;top:576px;width:18px;height:18px;background:#10a8a7;border:1px solid #f4f4f4;outline:1px solid #2a2a2a"></div>
<!-- quick mask -->
<svg style="left:10px;top:613px" width="18" height="14" viewBox="0 0 18 14"><rect x="0.6" y="0.6" width="16.8" height="12.8" fill="none" stroke="#d4d4d4" stroke-width="1.2"/><circle cx="9" cy="7" r="4" fill="none" stroke="#d4d4d4" stroke-width="1.2" stroke-dasharray="1.4 1.2"/></svg>
<!-- screen mode -->
<svg style="left:10px;top:638px" width="19" height="16" viewBox="0 0 19 16"><rect x="5.6" y="0.6" width="12" height="9" fill="#777" stroke="#d4d4d4" stroke-width="1.2"/><rect x="0.6" y="4.6" width="12" height="9" fill="#535353" stroke="#d4d4d4" stroke-width="1.2"/><rect x="0.6" y="4.6" width="12" height="2.5" fill="#d4d4d4"/></svg>

</div>
<!-- ===== RIGHT PANELS ===== -->
<div id="rightcol" class="a">
<div class="a" style="left:14px;top:0;width:3px;height:799px;background:#2b2b2b"></div>
<div class="a" style="left:17px;top:0;width:241px;height:13px;background:#3a3a3a;border-top:1px solid #303030"></div>
<svg style="left:246px;top:3px" width="8" height="6" viewBox="0 0 8 6"><path d="M0 0L3.5 3L0 6ZM4 0L7.5 3L4 6Z" fill="#cfcfcf"/></svg>
<div class="a" style="left:17px;top:13px;width:241px;height:184px;background:#535353"></div>
<div class="a" style="left:17px;top:13px;width:241px;height:17px;background:#424242;border-top:1px solid #353535;border-bottom:1px solid #363636"></div>
<div class="a" style="left:17px;top:13px;width:48px;height:18px;background:#535353;border-top:1px solid #666;border-right:1px solid #333"></div>
<div class="t" style="left:25px;top:17px;font-size:11px;color:#f0f0f0">导航器</div>
<div class="a" style="left:102px;top:14px;width:1px;height:15px;background:#333"></div>
<div class="t" style="left:73px;top:17px;font-size:11px;color:#a8a8a8">颜色</div>
<div class="a" style="left:139px;top:14px;width:1px;height:15px;background:#333"></div>
<div class="t" style="left:110px;top:17px;font-size:11px;color:#a8a8a8">色板</div>
<svg style="left:239px;top:18px" width="14" height="8" viewBox="0 0 14 8"><path d="M0 2H5L2.5 5Z" fill="#d0d0d0"/><path d="M6 0.5H14M6 3H14M6 5.5H14M6 8H14" stroke="#d0d0d0" stroke-width="1"/></svg>
<div class="a" style="left:46px;top:36px;width:183px;height:137px;background:#000;border:2px solid #f0524f"></div>
<svg style="left:48px;top:38px;overflow:hidden" width="179" height="133" viewBox="0 0 179 133"><g transform="scale(0.33) translate(-421.2 -261.4)"><use href="#fthr"/></g></svg>
<div class="a" style="left:17px;top:178px;width:241px;height:1px;background:#3c3c3c"></div>
<div class="a" style="left:17px;top:179px;width:58px;height:17px;background:#464646"></div>
<div class="t" style="left:19px;top:182px;font-size:11.500px;color:#7a7a7a;transform:scaleX(.82);transform-origin:0 0">122.14%</div>
<svg style="left:81px;top:187px" width="9" height="5" viewBox="0 0 9 5"><path d="M0 5L3 0.500L4.500 3L6 1.500L9 5Z" fill="#d8d8d8"/></svg>
<div class="a" style="left:103px;top:183px;width:106px;height:5px;border-radius:3px;background:#3e3e3e;border:1px solid #333;box-shadow:0 1px 0 #666"></div>
<svg style="left:154px;top:184px" width="11" height="9" viewBox="0 0 11 9"><path d="M5.500 0L10.500 6V9H0.500V6Z" fill="#c8c8c8" stroke="#888" stroke-width="0.600"/></svg>
<svg style="left:217px;top:183px" width="17" height="8" viewBox="0 0 17 8"><path d="M0 8L5 0.500L7.500 4.500L11 0L17 8Z" fill="#d8d8d8"/></svg>
<svg style="left:246px;top:185px" width="10" height="10" viewBox="0 0 10 10"><path d="M8 0h1v1h-1zM6 2h1v1h-1zM4 4h1v1h-1zM8 4h1v1h-1zM2 6h1v1h-1zM6 6h1v1h-1zM0 8h1v1h-1zM4 8h1v1h-1zM8 8h1v1h-1z" fill="#303030"/></svg>
<div class="a" style="left:17px;top:198px;width:241px;height:135px;background:#535353"></div>
<div class="a" style="left:17px;top:198px;width:241px;height:17px;background:#424242;border-top:1px solid #353535;border-bottom:1px solid #363636"></div>
<div class="a" style="left:17px;top:198px;width:37px;height:18px;background:#535353;border-top:1px solid #666;border-right:1px solid #333"></div>
<div class="t" style="left:25px;top:203px;font-size:11px;color:#f0f0f0">样式</div>
<svg style="left:239px;top:203px" width="14" height="8" viewBox="0 0 14 8"><path d="M0 2H5L2.5 5Z" fill="#d0d0d0"/><path d="M6 0.5H14M6 3H14M6 5.5H14M6 8H14" stroke="#d0d0d0" stroke-width="1"/></svg>
<div class="a" style="left:17px;top:216px;width:241px;height:98px;background:#434343"></div>
<div class="a" style="left:241px;top:216px;width:17px;height:98px;background:#4a4a4a"></div>
<div class="a" style="left:209px;top:281px;width:32px;height:33px;background:#4a4a4a"></div>
<div class="a" style="left:17px;top:217px;width:31px;height:31px;background:#3a3a3a"></div>
<div class="a" style="left:25px;top:225px;width:16px;height:16px;background:linear-gradient(135deg,#fff 50%,#ddd);border:1px solid #222"></div>
<svg style="left:23px;top:222px" width="21" height="22" viewBox="0 0 21 22"><path d="M0.500 0.500L20 21" stroke="#d01818" stroke-width="1.800"/></svg>
<div class="a" style="left:49px;top:217px;width:31px;height:31px;background:#535353"></div>
<div class="a" style="left:57px;top:225px;width:16px;height:16px;background:radial-gradient(circle at 55% 50%,#ffc800 0,#ff5a00 45%,#e00000 80%);box-shadow:1px 2px 2px #222,inset 0 0 0 1px #b00000"></div>
<div class="a" style="left:81px;top:217px;width:31px;height:31px;background:#535353"></div>
<div class="a" style="left:86px;top:222px;width:22px;height:22px;border:2px solid #ecebc0;border-radius:4px;box-shadow:0 0 2px #e8e4a0,inset 0 0 2px #e8e4a0"></div>
<div class="a" style="left:113px;top:217px;width:31px;height:31px;background:#535353"></div>
<div class="a" style="left:121px;top:225px;width:16px;height:16px;background:radial-gradient(circle,#333 0 2px,#777 3px,#222 5px,#666 6px,#222 8px);box-shadow:1px 2px 2px #222"></div>
<div class="a" style="left:145px;top:217px;width:31px;height:31px;background:#535353"></div>
<div class="a" style="left:153px;top:225px;width:16px;height:16px;background:linear-gradient(160deg,#a8d8ff 0,#2c78d8 45%,#1858b8 100%);box-shadow:inset 0 0 0 1px #5aa0e8"></div>
<div class="a" style="left:177px;top:217px;width:31px;height:31px;background:#535353"></div>
<div class="a" style="left:185px;top:225px;width:16px;height:16px;background:#a8a8a8"></div>
<div class="a" style="left:209px;top:217px;width:31px;height:31px;background:#535353"></div>
<div class="a" style="left:217px;top:225px;width:16px;height:16px;background:linear-gradient(170deg,#3a3a3a,#8a8a8a 70%,#666);box-shadow:inset 0 0 2px #bbb"></div>
<div class="a" style="left:17px;top:249px;width:31px;height:31px;background:#535353"></div>
<div class="a" style="left:25px;top:257px;width:16px;height:16px;background:linear-gradient(#6f5a30,#7a683c);opacity:.8"></div>
<div class="a" style="left:49px;top:249px;width:31px;height:31px;background:#535353"></div>
<div class="a" style="left:57px;top:257px;width:16px;height:16px;background:linear-gradient(#6a5422,#9c8a5c)"></div>
<div class="a" style="left:81px;top:249px;width:31px;height:31px;background:#535353"></div>
<div class="a" style="left:89px;top:257px;width:16px;height:16px;background:repeating-linear-gradient(#e01030 0 3px,#ff4060 3px 4px,#888 4px 6px,#d01030 6px 8px);box-shadow:inset 0 0 0 1px #c00020"></div>
<div class="a" style="left:113px;top:249px;width:31px;height:31px;background:#535353"></div>
<div class="a" style="left:121px;top:257px;width:16px;height:16px;background:conic-gradient(from 40deg at 45% 55%,#e8d020,#101010,#20b8b0,#d02020,#101010,#e8d020,#4040c0,#e8d020)"></div>
<div class="a" style="left:145px;top:249px;width:31px;height:31px;background:#535353"></div>
<div class="a" style="left:153px;top:257px;width:16px;height:16px;background:#c8b000;box-shadow:inset 0 0 0 4px #f0e000,inset 0 0 0 5px #a08800"></div>
<div class="a" style="left:177px;top:249px;width:31px;height:31px;background:#535353"></div>
<div class="a" style="left:185px;top:257px;width:16px;height:16px;background:linear-gradient(165deg,#b87848,#e89850 50%,#c8a030 80%,#a88820)"></div>
<div class="a" style="left:209px;top:249px;width:31px;height:31px;background:#535353"></div>
<div class="a" style="left:217px;top:257px;width:16px;height:16px;background:linear-gradient(#9cc8f8,#78acf0);box-shadow:inset 0 0 0 2px #b8dcff"></div>
<div class="a" style="left:17px;top:281px;width:31px;height:31px;background:#535353"></div>
<div class="a" style="left:25px;top:289px;width:16px;height:16px;background:linear-gradient(#4898e8 0,#a8d0f0 40%,#d8c898 55%,#8a5a10 75%,#c88a18 100%)"></div>
<div class="a" style="left:49px;top:281px;width:31px;height:31px;background:#535353"></div>
<svg style="left:57px;top:289px;overflow:hidden" width="16" height="16" viewBox="0 0 16 16"><filter id="nz" x="0" y="0" width="1" height="1"><feTurbulence type="fractalNoise" baseFrequency="0.55" numOctaves="2" seed="3"/><feColorMatrix type="matrix" values="0 0 0 0 0.5  0 0 0 0 0.5  0 0 0 0 0.5  2.2 2.2 0 0 -1.4"/></filter><rect width="16" height="16" fill="#fff"/><rect width="16" height="16" filter="url(#nz)"/></svg>
<div class="a" style="left:81px;top:281px;width:31px;height:31px;background:#535353"></div>
<div class="a" style="left:89px;top:289px;width:16px;height:16px;background:linear-gradient(#c070c0 0,#7060c8 35%,#4858b0 50%,#8060c0 75%,#a060b8 100%);box-shadow:2px 3px 2px #1c1c1c"></div>
<div class="a" style="left:113px;top:281px;width:31px;height:31px;background:#535353"></div>
<div class="a" style="left:121px;top:289px;width:16px;height:16px;background:#585858;box-shadow:1px 1px 0 #3a3a3a"></div>
<div class="a" style="left:145px;top:281px;width:31px;height:31px;background:#535353"></div>
<div class="a" style="left:153px;top:289px;width:16px;height:16px;background:#535353;box-shadow:inset 0 0 0 1px #3a3a3a;border-radius:2px"></div>
<div class="a" style="left:177px;top:281px;width:31px;height:31px;background:#535353"></div>
<div class="a" style="left:185px;top:289px;width:16px;height:16px;background:#535353;box-shadow:inset 0 0 0 1px #3a3a3a;border-radius:2px"></div>
<svg style="left:156px;top:317px" width="12" height="12" viewBox="0 0 12 12"><circle cx="6" cy="6" r="4.800" fill="none" stroke="#8c8c8c" stroke-width="1.600"/><path d="M2.500 2.500L9.500 9.500" stroke="#8c8c8c" stroke-width="1.600"/></svg>
<svg style="left:188px;top:317px" width="12" height="12" viewBox="0 0 12 12"><path d="M2 1H11V11H5V6H2Z" fill="#8c8c8c"/><path d="M1 7H4V10Z" fill="#8c8c8c"/></svg>
<svg style="left:217px;top:317px" width="12" height="13" viewBox="0 0 12 13"><path d="M0.500 3H11.500M4 2.500V1H8V2.500" fill="none" stroke="#8c8c8c" stroke-width="1.300"/><path d="M1.500 4.500H10.500L9.800 12.500H2.200Z" fill="#8c8c8c"/><path d="M4 5.500V11.500M6 5.500V11.500M8 5.500V11.500" stroke="#535353" stroke-width="0.800"/></svg>
<svg style="left:246px;top:323px" width="10" height="10" viewBox="0 0 10 10"><path d="M8 0h1v1h-1zM6 2h1v1h-1zM4 4h1v1h-1zM8 4h1v1h-1zM2 6h1v1h-1zM6 6h1v1h-1zM0 8h1v1h-1zM4 8h1v1h-1zM8 8h1v1h-1z" fill="#303030"/></svg>
<div class="a" style="left:17px;top:334px;width:241px;height:465px;background:#535353"></div>
<div class="a" style="left:17px;top:334px;width:241px;height:18px;background:#424242;border-top:1px solid #353535;border-bottom:1px solid #363636"></div>
<div class="a" style="left:17px;top:334px;width:37px;height:19px;background:#535353;border-top:1px solid #666;border-right:1px solid #333"></div>
<div class="t" style="left:25px;top:339px;font-size:11px;color:#f0f0f0">图层</div>
<div class="a" style="left:91px;top:335px;width:1px;height:16px;background:#333"></div>
<div class="t" style="left:61px;top:339px;font-size:11px;color:#a8a8a8">通道</div>
<div class="a" style="left:129px;top:335px;width:1px;height:16px;background:#333"></div>
<div class="t" style="left:98px;top:339px;font-size:11px;color:#a8a8a8">路径</div>
<div class="a" style="left:190px;top:335px;width:1px;height:16px;background:#333"></div>
<div class="t" style="left:136px;top:339px;font-size:11px;color:#a8a8a8">历史记录</div>
<svg style="left:239px;top:339px" width="14" height="8" viewBox="0 0 14 8"><path d="M0 2H5L2.5 5Z" fill="#d0d0d0"/><path d="M6 0.5H14M6 3H14M6 5.5H14M6 8H14" stroke="#d0d0d0" stroke-width="1"/></svg>
<div class="a dd2" style="left:22px;top:357px;width:82px;height:18px"></div>
<svg style="left:28px;top:360px" width="12" height="12" viewBox="0 0 12 12"><circle cx="7" cy="5" r="3.300" fill="none" stroke="#d8d8d8" stroke-width="1.700"/><path d="M4.500 7.500L1 11" stroke="#d8d8d8" stroke-width="2"/></svg>
<div class="t" style="left:43px;top:360px;font-size:12px;color:#a8a8a8">类型</div>
<svg style="left:93px;top:361px" width="6" height="10" viewBox="0 0 7 11"><path d="M0 4L3.500 0L7 4ZM0 7L3.500 11L7 7Z" fill="#a8a8a8"/></svg>
<svg style="left:118px;top:360px" width="13" height="11" viewBox="0 0 13 11"><rect x="0.600" y="0.600" width="11.800" height="9.800" fill="none" stroke="#e0e0e0" stroke-width="1.200"/><path d="M2 9L5 5L7 7.500L9 6L11 9Z" fill="#e0e0e0"/><circle cx="9.500" cy="3" r="1" fill="#e0e0e0"/></svg>
<svg style="left:142px;top:360px" width="11" height="11" viewBox="0 0 11 11"><circle cx="5.500" cy="5.500" r="4.700" fill="none" stroke="#e0e0e0" stroke-width="1.400"/><path d="M2.200 8.800A4.700 4.700 0 0 0 8.800 2.200Z" fill="#e0e0e0"/></svg>
<div class="t" style="left:166px;top:358px;font-family:'Liberation Serif',serif;font-weight:bold;font-size:15px;color:#e0e0e0">T</div>
<svg style="left:190px;top:360px" width="12" height="12" viewBox="0 0 12 12"><rect x="2" y="2" width="8" height="8" fill="none" stroke="#e0e0e0" stroke-width="1.200"/><path d="M0 0H3V3H0ZM9 0H12V3H9ZM0 9H3V12H0ZM9 9H12V12H9Z" fill="#e0e0e0"/></svg>
<svg style="left:214px;top:359px" width="12" height="13" viewBox="0 0 12 13"><path d="M4 1H9L11.500 3.500V11H4Z" fill="none" stroke="#e0e0e0" stroke-width="1.200"/><path d="M0.500 7H6V12.500H0.500Z" fill="#e0e0e0"/></svg>
<div class="a" style="left:243px;top:358px;width:8px;height:16px;border:1px solid #333;border-radius:2px;background:linear-gradient(#888 0 40%,#444 50% 100%)"></div>
<div class="a" style="left:17px;top:379px;width:241px;height:1px;background:#3e3e3e;box-shadow:0 1px 0 #5e5e5e"></div>
<div class="a dd2" style="left:22px;top:385px;width:110px;height:18px"></div>
<div class="t" style="left:30px;top:388px;font-size:12px;color:#a0a0a0">正常</div>
<svg style="left:121px;top:389px" width="6" height="10" viewBox="0 0 7 11"><path d="M0 4L3.500 0L7 4ZM0 7L3.500 11L7 7Z" fill="#a8a8a8"/></svg>
<div class="t" style="left:140px;top:388px;font-size:12px;color:#a8a8a8">不透明度:</div>
<div class="a" style="left:197px;top:385px;width:55px;height:19px;background:#3e3e3e;border:1px solid #333;border-radius:3px;box-shadow:0 1px 0 #606060"></div>
<div class="a" style="left:233px;top:386px;width:18px;height:17px;background:linear-gradient(#6c6c6c,#585858);border-left:1px solid #333;border-radius:0 2px 2px 0"></div>
<div class="t" style="left:201px;top:389px;font-size:11.500px;color:#6e6e6e">100%</div>
<svg style="left:239px;top:393px" width="7" height="4" viewBox="0 0 7 4"><path d="M0 0H7L3.500 4Z" fill="#e8e8e8"/></svg>
<div class="a" style="left:17px;top:408px;width:241px;height:1px;background:#3e3e3e;box-shadow:0 1px 0 #5e5e5e"></div>
<div class="t" style="left:24px;top:416px;font-size:12px;color:#a0a0a0">锁定:</div>
<div class="a" style="left:61px;top:417px;width:11px;height:11px;border:1px solid #ddd;background:conic-gradient(#ddd 25%,#777 0 50%,#ddd 0 75%,#777 0) 0 0/6px 6px"></div>
<svg style="left:81px;top:414px" width="15" height="15" viewBox="0 0 15 15"><path d="M14 0.500L6.500 9L8 10.300Z" fill="#e0e0e0"/><path d="M5.800 9.500C3.500 9.500 4 12 0.800 13C4.500 14.500 7.500 13 7.500 10.800Z" fill="#e0e0e0"/></svg>
<svg style="left:104px;top:415px" width="13" height="13" viewBox="0 0 13 13"><path d="M6.500 2V11M2 6.500H11" stroke="#e0e0e0" stroke-width="1.300"/><path d="M6.500 0L4 3H9ZM6.500 13L4 10H9ZM0 6.500L3 4V9ZM13 6.500L10 4V9Z" fill="#e0e0e0"/></svg>
<svg style="left:128px;top:415px" width="10" height="13" viewBox="0 0 10 13"><path d="M2.500 6V3.500a2.500 2.500 0 0 1 5 0V6" fill="none" stroke="#e0e0e0" stroke-width="1.600"/><rect x="0" y="5.500" width="10" height="7.500" fill="#e0e0e0"/><rect x="4.200" y="8" width="1.600" height="2.800" fill="#535353"/></svg>
<div class="t" style="left:165px;top:416px;font-size:12px;color:#a8a8a8">填充:</div>
<div class="a" style="left:197px;top:413px;width:55px;height:19px;background:#3e3e3e;border:1px solid #333;border-radius:3px;box-shadow:0 1px 0 #606060"></div>
<div class="a" style="left:233px;top:414px;width:18px;height:17px;background:linear-gradient(#6c6c6c,#585858);border-left:1px solid #333;border-radius:0 2px 2px 0"></div>
<div class="t" style="left:201px;top:417px;font-size:11.500px;color:#6e6e6e">100%</div>
<svg style="left:239px;top:421px" width="7" height="4" viewBox="0 0 7 4"><path d="M0 0H7L3.500 4Z" fill="#e8e8e8"/></svg>
<div class="a" style="left:17px;top:437px;width:225px;height:1px;background:#3c3c3c"></div>
<div class="a" style="left:17px;top:573px;width:226px;height:206px;background:#484848"></div>
<div class="a" style="left:243px;top:437px;width:15px;height:342px;background:#424242"></div>
<div class="a" style="left:48px;top:438px;width:1px;height:135px;background:#3c3c3c"></div>
<div class="a" style="left:49px;top:438px;width:183px;height:32px;background:#697e9a"></div>
<div class="a" style="left:232px;top:438px;width:10px;height:32px;background:linear-gradient(90deg,#8a8a8a,#b4b4b4 50%,#8a8a8a)"></div>
<svg style="left:234px;top:450px" width="7" height="4" viewBox="0 0 7 4"><path d="M0 4H7L3.500 0Z" fill="#222"/></svg>
<svg style="left:26px;top:449px" width="12.500" height="8.500" viewBox="0 0 14 9"><path d="M0.500 4.500C3 0.500 11 0.500 13.500 4.500C11 8.500 3 8.500 0.500 4.500Z" fill="#d0d0d0" stroke="#d0d0d0" stroke-width="1"/><circle cx="7" cy="4.300" r="2.700" fill="#4a4a4a"/><circle cx="7" cy="4.300" r="1.700" fill="#8a8a8a"/><circle cx="7" cy="4.300" r="0.900" fill="#333"/></svg>
<div class="a" style="left:52px;top:441px;width:32px;height:26px;background:conic-gradient(#fff 25%,#ccc 0 50%,#fff 0 75%,#ccc 0) 0 0/8px 8px;border:1px solid #000"></div>
<svg style="left:50px;top:439px" width="36" height="30" viewBox="0 0 36 30"><path d="M0.500 8V0.500H8M28 0.500H35.500V8M35.500 22V29.500H28M8 29.500H0.500V22" fill="none" stroke="#fff" stroke-width="1"/></svg>
<div class="a" style="left:58px;top:438px;width:20px;height:32px;background:none"></div>
<div class="t" style="left:92px;top:448px;font-size:12px;color:#fff">图层 2</div>
<div class="t" style="left:215px;top:446px;font-family:'Liberation Serif',serif;font-style:italic;font-size:14px;color:#eee">fx</div>
<svg style="left:67px;top:476px" width="12.500" height="8.500" viewBox="0 0 14 9"><path d="M0.500 4.500C3 0.500 11 0.500 13.500 4.500C11 8.500 3 8.500 0.500 4.500Z" fill="#b8b8b8" stroke="#b8b8b8" stroke-width="1"/><circle cx="7" cy="4.300" r="2.700" fill="#4a4a4a"/><circle cx="7" cy="4.300" r="1.700" fill="#8a8a8a"/><circle cx="7" cy="4.300" r="0.900" fill="#333"/></svg>
<div class="t" style="left:85px;top:474px;font-size:12px;color:#e8e8e8">效果</div>
<svg style="left:84px;top:495px" width="12.500" height="8.500" viewBox="0 0 14 9"><path d="M0.500 4.500C3 0.500 11 0.500 13.500 4.500C11 8.500 3 8.500 0.500 4.500Z" fill="#b8b8b8" stroke="#b8b8b8" stroke-width="1"/><circle cx="7" cy="4.300" r="2.700" fill="#4a4a4a"/><circle cx="7" cy="4.300" r="1.700" fill="#8a8a8a"/><circle cx="7" cy="4.300" r="0.900" fill="#333"/></svg>
<div class="t" style="left:102px;top:493px;font-size:12px;color:#e8e8e8">斜面和浮雕</div>
<div class="a" style="left:17px;top:507px;width:225px;height:1px;background:#3c3c3c"></div>
<svg style="left:26px;top:519px" width="12.500" height="8.500" viewBox="0 0 14 9"><path d="M0.500 4.500C3 0.500 11 0.500 13.500 4.500C11 8.500 3 8.500 0.500 4.500Z" fill="#d0d0d0" stroke="#d0d0d0" stroke-width="1"/><circle cx="7" cy="4.300" r="2.700" fill="#4a4a4a"/><circle cx="7" cy="4.300" r="1.700" fill="#8a8a8a"/><circle cx="7" cy="4.300" r="0.900" fill="#333"/></svg>
<div class="a" style="left:51px;top:511px;width:32px;height:25px;background:conic-gradient(#fff 25%,#ccc 0 50%,#fff 0 75%,#ccc 0) 0 0/8px 8px;border:1px solid #000"></div>
<div class="a" style="left:64px;top:516px;width:4px;height:15px;border-radius:2px;background:linear-gradient(#ff8a00,#ffe800 50%,#fffbd0)"></div>
<div class="t" style="left:92px;top:518px;font-size:12px;color:#f0f0f0">图层 1</div>
<div class="a" style="left:17px;top:539px;width:225px;height:1px;background:#3c3c3c"></div>
<svg style="left:26px;top:551px" width="12.500" height="8.500" viewBox="0 0 14 9"><path d="M0.500 4.500C3 0.500 11 0.500 13.500 4.500C11 8.500 3 8.500 0.500 4.500Z" fill="#d0d0d0" stroke="#d0d0d0" stroke-width="1"/><circle cx="7" cy="4.300" r="2.700" fill="#4a4a4a"/><circle cx="7" cy="4.300" r="1.700" fill="#8a8a8a"/><circle cx="7" cy="4.300" r="0.900" fill="#333"/></svg>
<div class="a" style="left:51px;top:543px;width:32px;height:25px;background:#000;border:1px solid #222"></div>
<div class="t" style="left:95px;top:550px;font-size:12px;font-style:italic;color:#f0f0f0;transform:skewX(-12deg)">背景</div>
<svg style="left:215px;top:549px" width="10" height="13" viewBox="0 0 10 13"><path d="M2.500 6V3.500a2.500 2.500 0 0 1 5 0V6" fill="none" stroke="#d0d0d0" stroke-width="1.400"/><rect x="0.700" y="5.700" width="8.600" height="6.600" fill="none" stroke="#d0d0d0" stroke-width="1.400"/><rect x="4" y="8" width="2" height="2.500" fill="#d0d0d0"/></svg>
<div class="a" style="left:17px;top:572px;width:225px;height:1px;background:#3c3c3c"></div>
<div class="a" style="left:17px;top:778px;width:241px;height:1px;background:#3c3c3c"></div>
<div class="a" style="left:17px;top:779px;width:241px;height:1px;background:#686868"></div>
<div class="a" style="left:17px;top:797px;width:241px;height:2px;background:#2e2e2e"></div>
<svg style="left:54px;top:785px" width="14" height="8" viewBox="0 0 14 8"><path d="M6 1.300H3.700a2.700 2.700 0 0 0 0 5.400H6M8 1.300H10.300a2.700 2.700 0 0 1 0 5.400H8" fill="none" stroke="#a8a8a8" stroke-width="1.600"/><path d="M4.500 4H9.500" stroke="#a8a8a8" stroke-width="1.600"/></svg>
<div class="t" style="left:82px;top:781px;font-family:'Liberation Serif',serif;font-style:italic;font-size:14px;color:#d8d8d8">fx</div>
<svg style="left:96px;top:792px" width="4" height="3" viewBox="0 0 4 3"><path d="M0 0H4L2 3Z" fill="#d8d8d8"/></svg>
<svg style="left:109px;top:784px" width="13" height="10" viewBox="0 0 13 10"><rect width="13" height="10" fill="#d8d8d8"/><circle cx="6.500" cy="5" r="2.800" fill="#535353"/></svg>
<svg style="left:136px;top:783px" width="12" height="12" viewBox="0 0 12 12"><circle cx="6" cy="6" r="5" fill="none" stroke="#d8d8d8" stroke-width="1.500"/><path d="M2.500 9.500A5 5 0 0 0 9.500 2.500Z" fill="#d8d8d8"/></svg>
<svg style="left:150px;top:792px" width="4" height="3" viewBox="0 0 4 3"><path d="M0 0H4L2 3Z" fill="#d8d8d8"/></svg>
<svg style="left:162px;top:783px" width="14" height="11" viewBox="0 0 14 11"><path d="M0 0H5L6.500 2H14V11H0Z" fill="#c8c8c8"/></svg>
<svg style="left:188px;top:783px" width="12" height="12" viewBox="0 0 12 12"><path d="M2 0H12V11H5V5H2Z" fill="#d8d8d8"/><path d="M0 6.500H4V10.500Z" fill="#d8d8d8"/></svg>
<svg style="left:217px;top:783px" width="12" height="13" viewBox="0 0 12 13"><path d="M0.500 3H11.500M4 2.500V1H8V2.500" fill="none" stroke="#d0d0d0" stroke-width="1.300"/><path d="M1.500 4.500H10.500L9.800 12.500H2.200Z" fill="#d0d0d0"/><path d="M4 5.500V11.500M6 5.500V11.500M8 5.500V11.500" stroke="#535353" stroke-width="0.800"/></svg>
</div>
<!-- ===== DIALOG ===== -->
<div id="dlg" class="a" style="left:885px;top:207px;width:476px;height:505px;border-radius:7px;border:1px solid rgba(0,0,0,.9);overflow:hidden;background:linear-gradient(100deg,#9aa0a6 0,#8a9097 10%,#666d75 25%,#333941 38%,#232931 46%,#262c34 52%,#4a525c 64%,#6c747e 74%,#646d78 85%,#5b6470 100%);box-shadow:0 2px 10px rgba(0,0,0,.55)">
<div class="a" style="left:1px;top:27px;width:5px;height:472px;background:linear-gradient(#8a9096 0,#7a8087 4%,#3a3f45 14%,#0a0e12 22%,#0a0e12 92%,#3a434e 100%)"></div>
<div class="a" style="left:468px;top:27px;width:5px;height:472px;background:linear-gradient(#5e6873,#566270 40%,#465260 100%)"></div>
<div class="a" style="left:1px;top:497px;width:472px;height:5px;background:linear-gradient(90deg,#3a434e,#44505e 20%,#455160)"></div>
<div class="a" style="left:0;top:0;width:474px;height:503px;border-radius:6px;border:1px solid rgba(215,220,226,.9)"></div>
<div class="a" style="left:2px;top:3px;width:120px;height:22px;background:radial-gradient(ellipse at 32% 50%,rgba(255,255,255,.5),rgba(255,255,255,0) 70%)"></div>
<div class="t" style="left:7px;top:8px;font-size:12px;color:#000;text-shadow:0 0 4px #fff,0 0 6px #fff">渐变编辑器</div>
<div class="a" style="left:364px;top:-1px;width:104px;height:20px;border:1px solid #33373c;border-top:none;border-radius:0 0 5px 5px;box-shadow:0 0 0 1px rgba(255,255,255,.5);overflow:hidden">
<div class="a" style="left:0;top:0;width:27px;height:19px;background:linear-gradient(#aab0b6 0,#8d949b 45%,#5c646c 50%,#767e86 100%);border-right:1px solid #3b3f44"></div>
<div class="a" style="left:28px;top:0;width:26px;height:19px;background:linear-gradient(#aab0b6 0,#8d949b 45%,#5c646c 50%,#767e86 100%);border-right:1px solid #3b3f44"></div>
<div class="a" style="left:55px;top:0;width:47px;height:19px;background:linear-gradient(#eaa898 0,#d8705c 45%,#c23a1c 50%,#d2553a 100%)"></div>
<div class="a" style="left:9px;top:10px;width:10px;height:3px;background:#aab0b5;border:1px solid #7b838a"></div>
<div class="a" style="left:37px;top:5px;width:10px;height:8px;border:2px solid #f4f4f4;outline:1px solid #5a6168;background:#7d858d"></div>
</div>
<div class="t" style="left:439px;top:0px;font-size:14px;font-weight:bold;color:#fff;text-shadow:0 0 1px #5a1a10,0 0 2px #5a1a10;font-family:'Liberation Sans',sans-serif;transform:scaleX(1.3)">x</div>
<div class="a" style="left:5px;top:27px;width:464px;height:471px;border:1px solid #9aa0a8;border-radius:1px"><div class="a" style="left:0;top:0;width:462px;height:469px;background:#dfdfdf;border:1px solid #1c1e22;box-shadow:inset 0 0 0 1px #f0f1f1"></div></div>
</div>
<div class="a" style="left:903px;top:254px;width:333px;height:139px;border:1px solid #b4b4b4;box-shadow:1px 1px 0 #f8f8f8,inset 1px 1px 0 #f8f8f8"></div>
<div class="a" style="left:922px;top:252px;width:34px;height:5px;background:#dfdfdf"></div>
<div class="t dt" style="left:927px;top:249px;font-size:12px;color:#000">预设</div>
<div class="a" style="left:1199px;top:252px;width:22px;height:5px;background:#dfdfdf"></div>
<svg style="left:1202px;top:248px" width="16" height="12" viewBox="0 0 16 12"><circle cx="6" cy="6" r="3.300" fill="none" stroke="#222" stroke-width="2.200"/><path d="M6 0V12M0 6H12M1.800 1.800L10.200 10.200M10.200 1.800L1.800 10.200" stroke="#222" stroke-width="1.600"/><circle cx="6" cy="6" r="1.500" fill="#dfdfdf"/><path d="M13 9H16L14.500 11Z" fill="#222"/></svg>
<div class="a" style="left:913px;top:269px;width:313px;height:115px;background:#c8c8c8;border:1px solid #8c8c8c;box-shadow:1px 1px 0 #fff"></div>
<div class="a" style="left:1209px;top:270px;width:16px;height:113px;background:linear-gradient(90deg,#c4c4c4,#e8e8e8 35%,#fafafa 60%,#dcdcdc)"></div>
<div class="a" style="left:915px;top:271px;width:31px;height:31px;background:linear-gradient(135deg,#17a3a5 20%,#fff 85%);box-shadow:0 0 0 1px #a8a8a8"></div>
<div class="a" style="left:947px;top:271px;width:31px;height:31px;background:linear-gradient(135deg,#17a3a5 12%,rgba(23,163,165,0) 75%),conic-gradient(#fff 25%,#ccc 0 50%,#fff 0 75%,#ccc 0) 0 0/8px 8px;box-shadow:0 0 0 1px #a8a8a8"></div>
<div class="a" style="left:979px;top:271px;width:31px;height:31px;background:linear-gradient(135deg,#000 20%,#fff 82%);box-shadow:0 0 0 1px #a8a8a8"></div>
<div class="a" style="left:1011px;top:271px;width:31px;height:31px;background:linear-gradient(135deg,#e10019 18%,#00601b 85%);box-shadow:0 0 0 1px #a8a8a8"></div>
<div class="a" style="left:1043px;top:271px;width:31px;height:31px;background:linear-gradient(135deg,#290a59 15%,#ff7c00 85%);box-shadow:0 0 0 1px #a8a8a8"></div>
<div class="a" style="left:1075px;top:271px;width:31px;height:31px;background:linear-gradient(135deg,#0a00b2 18%,#ff0000 50%,#fffc00 85%);box-shadow:0 0 0 1px #a8a8a8"></div>
<div class="a" style="left:1107px;top:271px;width:31px;height:31px;background:linear-gradient(135deg,#0b01b8 24%,#fdfa03 50%,#0b02aa 76%);box-shadow:0 0 0 1px #a8a8a8"></div>
<div class="a" style="left:1139px;top:271px;width:31px;height:31px;background:linear-gradient(135deg,#ff6e02 18%,#ffff00 50%,#ff6d00 82%);box-shadow:0 0 0 1px #a8a8a8"></div>
<div class="a" style="left:1171px;top:271px;width:31px;height:31px;background:linear-gradient(135deg,#6f156c 15%,#00601b 50%,#fd7c00 85%);box-shadow:0 0 0 1px #a8a8a8"></div>
<div class="a" style="left:915px;top:303px;width:31px;height:31px;background:linear-gradient(135deg,#f9e600 25%,#6f156c 42%,#fd7c00 58%,#002874 75%);box-shadow:0 0 0 1px #a8a8a8"></div>
<div class="a" style="left:947px;top:303px;width:31px;height:31px;background:linear-gradient(135deg,#97461a 15%,#fbd8c5 40%,#6c2e16 70%,#efdbcd 90%);box-shadow:0 0 0 1px #a8a8a8"></div>
<div class="a" style="left:979px;top:303px;width:31px;height:31px;background:linear-gradient(135deg,#2989cc 12%,#fff 49%,#906a00 51%,#d99f00 62%,#fff 88%);box-shadow:0 0 0 1px #a8a8a8"></div>
<div class="a" style="left:1011px;top:303px;width:31px;height:31px;background:linear-gradient(135deg,#f00 14%,#f0f 27%,#00f 40%,#0ff 52%,#0f0 64%,#ff0 76%,#f00 88%);box-shadow:0 0 0 1px #a8a8a8"></div>
<div class="a" style="left:1043px;top:303px;width:31px;height:31px;background:linear-gradient(135deg,rgba(255,0,0,0) 22%,#f00 32%,#ff0 41%,#0f0 50%,#0ff 58%,#00f 66%,#f0f 74%,rgba(255,0,255,0) 84%),conic-gradient(#fff 25%,#ccc 0 50%,#fff 0 75%,#ccc 0) 0 0/8px 8px;box-shadow:0 0 0 1px #a8a8a8"></div>
<div class="a" style="left:1075px;top:303px;width:31px;height:31px;background:linear-gradient(135deg,#17a3a5 0 34%,rgba(0,0,0,0) 34% 40%,#17a3a5 40% 46%,rgba(0,0,0,0) 46% 52%,#17a3a5 52% 58%,rgba(0,0,0,0) 58% 64%,#17a3a5 64% 70%,rgba(0,0,0,0) 70% 76%,#17a3a5 76% 82%,rgba(0,0,0,0) 82%),conic-gradient(#fff 25%,#ccc 0 50%,#fff 0 75%,#ccc 0) 0 0/8px 8px;box-shadow:0 0 0 1px #a8a8a8"></div>
<div class="a" style="left:1107px;top:303px;width:31px;height:31px;background:linear-gradient(135deg,rgba(60,60,60,.75) 5%,rgba(90,90,90,.1) 45%,rgba(90,90,90,0) 60%,rgba(60,60,60,.45) 100%),conic-gradient(#fff 25%,#ccc 0 50%,#fff 0 75%,#ccc 0) 0 0/8px 8px;box-shadow:0 0 0 1px #a8a8a8"></div>
<div class="a" style="left:1139px;top:303px;width:31px;height:31px;background:linear-gradient(135deg,#2a1a1c 30%,#4a4a4a 45%,#8a8a8a 58%,#cfcfcf 70%,#fff 82%);box-shadow:0 0 0 1px #a8a8a8"></div>
<div class="a" style="left:1171px;top:303px;width:31px;height:31px;background:linear-gradient(135deg,#faf4f2 18%,#c8d0e8 32%,#2a3c9c 55%,#0a1040 80%);box-shadow:0 0 0 1px #a8a8a8"></div>
<div class="a" style="left:915px;top:335px;width:31px;height:31px;background:linear-gradient(135deg,#fff 22%,#6c8a3c 40%,#34501c 55%,#0c1406 75%);box-shadow:0 0 0 1px #a8a8a8"></div>
<div class="a" style="left:947px;top:335px;width:31px;height:31px;background:linear-gradient(135deg,rgba(0,0,0,0) 70%,#e8d8ff 74%,#40a0ff 79%,#40e040 83%,#ffe000 87%,#ff3020 91%,rgba(0,0,0,0) 93%),linear-gradient(135deg,rgba(200,200,255,0) 30%,rgba(190,190,255,.8) 70%),conic-gradient(#fff 25%,#cfcff0 0 50%,#fff 0 75%,#cfcff0 0) 0 0/8px 8px;box-shadow:0 0 0 1px #a8a8a8"></div>
<div class="a" style="left:1251px;top:253px;width:92px;height:22px;border:1px solid #6a6a6a;border-radius:3px;background:linear-gradient(#f6f6f6 0,#ececec 48%,#dedede 52%,#d2d2d2 100%);box-shadow:inset 0 0 0 1px #787878,inset 0 0 0 2px #fff;text-align:center;font-size:12px;color:#000;line-height:22px;letter-spacing:.8px;white-space:nowrap">确定</div>
<div class="a" style="left:1252px;top:284px;width:90px;height:20px;border:1px solid #8e8e8e;border-radius:3px;background:linear-gradient(#f6f6f6 0,#ececec 48%,#dedede 52%,#d2d2d2 100%);box-shadow:inset 0 0 0 1px #fbfbfb;text-align:center;font-size:12px;color:#000;line-height:20px;letter-spacing:.8px;white-space:nowrap">取消</div>
<div class="a" style="left:1252px;top:321px;width:90px;height:20px;border:1px solid #8e8e8e;border-radius:3px;background:linear-gradient(#f6f6f6 0,#ececec 48%,#dedede 52%,#d2d2d2 100%);box-shadow:inset 0 0 0 1px #fbfbfb;text-align:center;font-size:12px;color:#000;line-height:20px;letter-spacing:.8px;white-space:nowrap">载入(L)...</div>
<div class="a" style="left:1252px;top:351px;width:90px;height:20px;border:1px solid #8e8e8e;border-radius:3px;background:linear-gradient(#f6f6f6 0,#ececec 48%,#dedede 52%,#d2d2d2 100%);box-shadow:inset 0 0 0 1px #fbfbfb;text-align:center;font-size:12px;color:#000;line-height:20px;letter-spacing:.8px;white-space:nowrap">存储(S)...</div>
<div class="a" style="left:1259px;top:411px;width:82px;height:20px;border:1px solid #8e8e8e;border-radius:3px;background:linear-gradient(#f6f6f6 0,#ececec 48%,#dedede 52%,#d2d2d2 100%);box-shadow:inset 0 0 0 1px #fbfbfb;text-align:center;font-size:12px;color:#000;line-height:20px;letter-spacing:.8px;white-space:nowrap">新建(W)</div>
<div class="t dt" style="left:906px;top:416px;font-size:12px;color:#000">名称(N):</div>
<div class="a" style="left:974px;top:411px;width:268px;height:21px;background:#fff;border:1px solid #8a8a8a;border-top-color:#6a6a6a"></div>
<div class="t dt" style="left:978px;top:417px;font-size:12px;color:#000">自定</div>
<div class="a" style="left:903px;top:455px;width:437px;height:226px;border:1px solid #b4b4b4;box-shadow:1px 1px 0 #f8f8f8,inset 1px 1px 0 #f8f8f8"></div>
<div class="a" style="left:918px;top:453px;width:163px;height:5px;background:#dfdfdf"></div>
<div class="t dt" style="left:955px;top:454px;font-size:12px;color:#000">渐变类型:</div>
<div class="a" style="left:1017px;top:449px;width:60px;height:20px;border:1px solid #8a8a8a;border-radius:3px;background:linear-gradient(#fafafa,#e8e8e8)"></div>
<div class="t dt" style="left:1026px;top:454px;font-size:12px;color:#000">实底</div>
<svg style="left:1066px;top:454px" width="6" height="10" viewBox="0 0 6 10"><path d="M0 3.500L3 0L6 3.500ZM0 6.500L3 10L6 6.500Z" fill="#222"/></svg>
<div class="t dt" style="left:942px;top:486px;font-size:12px;color:#000">平滑度(M):</div>
<div class="a" style="left:1010px;top:481px;width:49px;height:21px;border:1px solid #8a8a8a;border-radius:2px;background:#fff"></div>
<div class="a" style="left:1039px;top:482px;width:19px;height:19px;border-left:1px solid #8a8a8a;background:linear-gradient(#f8f8f8,#e2e2e2)"></div>
<div class="t dt" style="left:1014px;top:487px;font-size:12px;color:#000">100</div>
<svg style="left:1046px;top:489px" width="7" height="4" viewBox="0 0 7 4"><path d="M0 0H7L3.500 4Z" fill="#333"/></svg>
<div class="t dt" style="left:1067px;top:486px;font-size:12px;color:#000">%</div>
<div class="a" style="left:918px;top:528px;width:410px;height:27px;border:1px solid #8a8a8a;background:linear-gradient(90deg,#ff6e02 0,#ff9a00 22%,#ffd800 38%,#ffff00 50%,#ffff60 65%,#ffffc8 82%,#fdfdf6 100%)"></div>
<svg style="left:915px;top:511px" width="12" height="17" viewBox="0 0 12 17"><path d="M1 11.500H11L6 16.500Z" fill="#fff" stroke="#555" stroke-width="1"/><rect x="1" y="0.500" width="10" height="11" fill="#fff" stroke="#444" stroke-width="1"/><rect x="3" y="2.500" width="6" height="7" fill="#000"/></svg>
<svg style="left:1318px;top:511px" width="12" height="17" viewBox="0 0 12 17"><path d="M1 11.500H11L6 16.500Z" fill="#fff" stroke="#555" stroke-width="1"/><rect x="1" y="0.500" width="10" height="11" fill="#fff" stroke="#444" stroke-width="1"/><rect x="3" y="2.500" width="6" height="7" fill="#000"/></svg>
<svg style="left:915px;top:555px" width="12" height="18" viewBox="0 0 12 18"><path d="M1 6H11L6 0.800Z" fill="#fff" stroke="#555" stroke-width="1"/><rect x="1" y="6" width="10" height="11" fill="#fff" stroke="#666" stroke-width="1"/><rect x="3" y="8" width="6" height="7" fill="#f56a00"/></svg>
<svg style="left:1116px;top:555px" width="12" height="18" viewBox="0 0 12 18"><path d="M1 6H11L6 0.800Z" fill="#fff" stroke="#555" stroke-width="1"/><rect x="1" y="6" width="10" height="11" fill="#fff" stroke="#666" stroke-width="1"/><rect x="3" y="8" width="6" height="7" fill="#f8f000"/></svg>
<svg style="left:1318px;top:555px" width="12" height="18" viewBox="0 0 12 18"><path d="M1 6H11L6 0.800Z" fill="#fff" stroke="#555" stroke-width="1"/><rect x="1" y="6" width="10" height="11" fill="#fff" stroke="#666" stroke-width="1"/><rect x="3" y="8" width="6" height="7" fill="#fcfcf4"/></svg>
<div class="a" style="left:913px;top:587px;width:419px;height:85px;border:1px solid #b4b4b4;box-shadow:1px 1px 0 #f8f8f8,inset 1px 1px 0 #f8f8f8"></div>
<div class="a" style="left:932px;top:585px;width:35px;height:5px;background:#dfdfdf"></div>
<div class="t dt" style="left:937px;top:582px;font-size:12px;color:#000">色标</div>
<div class="t dt" style="left:948px;top:610px;font-size:12px;color:#8a8a8a">不透明度:</div>
<div class="a" style="left:1010px;top:605px;width:49px;height:21px;border:1px solid #b8b8b8;border-radius:2px;background:#ececec"></div>
<div class="a" style="left:1039px;top:606px;width:19px;height:19px;border-left:1px solid #b8b8b8;background:linear-gradient(#f8f8f8,#e2e2e2)"></div>
<svg style="left:1046px;top:613px" width="7" height="4" viewBox="0 0 7 4"><path d="M0 0H7L3.500 4Z" fill="#8a8a8a"/></svg>
<div class="t dt" style="left:1067px;top:610px;font-size:12px;color:#8a8a8a">%</div>
<div class="t dt" style="left:1123px;top:610px;font-size:12px;color:#8a8a8a">位置:</div>
<div class="a" style="left:1159px;top:605px;width:42px;height:21px;border:1px solid #b8b8b8;background:#ececec"></div>
<div class="t dt" style="left:1208px;top:610px;font-size:12px;color:#8a8a8a">%</div>
<div class="a" style="left:1242px;top:605px;width:80px;height:20px;border:1px solid #b0b0b0;border-radius:3px;background:linear-gradient(#f2f2f2,#e6e6e6);box-shadow:inset 0 0 0 1px #fbfbfb;text-align:center;font-size:12px;color:#8c8c8c;line-height:20px;letter-spacing:.8px;white-space:nowrap">删除(D)</div>
<div class="t dt" style="left:974px;top:645px;font-size:12px;color:#8a8a8a">颜色:</div>
<div class="a" style="left:1009px;top:640px;width:44px;height:21px;border:1px solid #b0b0b0;background:#e4e4e4"></div>
<div class="a" style="left:1053px;top:640px;width:18px;height:21px;border:1px solid #b8b8b8;border-left:none;background:linear-gradient(#f4f4f4,#e4e4e4)"></div>
<svg style="left:1058px;top:645px" width="7" height="11" viewBox="0 0 7 11"><path d="M0 0L7 5.500L0 11Z" fill="#a8a8a8"/></svg>
<div class="t dt" style="left:1123px;top:645px;font-size:12px;color:#8a8a8a">位置:</div>
<div class="a" style="left:1159px;top:640px;width:42px;height:21px;border:1px solid #b8b8b8;background:#ececec"></div>
<div class="t dt" style="left:1208px;top:645px;font-size:12px;color:#8a8a8a">%</div>
<div class="a" style="left:1242px;top:640px;width:80px;height:20px;border:1px solid #b0b0b0;border-radius:3px;background:linear-gradient(#f2f2f2,#e6e6e6);box-shadow:inset 0 0 0 1px #fbfbfb;text-align:center;font-size:12px;color:#8c8c8c;line-height:20px;letter-spacing:.8px;white-space:nowrap">删除(D)</div>
<!-- ===== TASKBAR ===== -->
<div id="taskbar" class="a">
<!-- base gradient (wallpaper through glass) -->
<div class="a" style="left:0;top:0;width:1600px;height:40px;background:linear-gradient(90deg,#7a98be 0,#8eafd4 60px,#a2c3e8 200px,#abcdf0 500px,#a6c8ec 800px,#b2d4f4 1000px,#a8caee 1250px,#86a5c8 1320px,#7f9dc0 1450px,#7a98bc 1600px)"></div>
<div class="a" style="left:0;top:0;width:1600px;height:40px;background:linear-gradient(rgba(255,255,255,.18),rgba(255,255,255,0) 40%,rgba(0,0,0,.04))"></div>
<!-- wallpaper shapes -->
<div class="a" style="left:1080px;top:0;width:260px;height:39px;overflow:hidden">
 <div class="a" style="left:18px;top:12px;width:34px;height:9px;border-radius:50%;background:#8cc070;transform:rotate(15deg);filter:blur(2.5px)"></div>
 <div class="a" style="left:44px;top:20px;width:50px;height:15px;border-radius:50%;background:#78b45a;transform:rotate(-12deg);filter:blur(3px)"></div>
 <div class="a" style="left:78px;top:24px;width:60px;height:30px;border-radius:40% 60% 0 0;background:#2c8cc0;transform:skewX(-35deg);filter:blur(3px)"></div>
 <div class="a" style="left:128px;top:21px;width:50px;height:30px;border-radius:50% 50% 0 0;background:#2a88bc;filter:blur(3px)"></div>
 <div class="a" style="left:188px;top:24px;width:70px;height:9px;background:#3a8eb8;transform:skewX(-30deg);filter:blur(3px)"></div>
 <div class="a" style="left:175px;top:36px;width:60px;height:8px;background:#3a8eb8;filter:blur(3px)"></div>
</div>
<div class="a" style="left:0;top:0;width:1600px;height:1px;background:#3a4048"></div>
<div class="a" style="left:0;top:1px;width:1600px;height:1px;background:rgba(255,255,255,.45)"></div>
<!-- start orb -->
<div class="a" style="left:9px;top:2px;width:36px;height:36px;border-radius:50%;background:radial-gradient(ellipse at 50% 100%,#1ce4ff 0,#0c98dc 22%,rgba(10,90,170,0) 52%),linear-gradient(#ccdcec 0,#a4c0dc 28%,#7098c4 46%,#0c4a90 50%,#0a58a4 72%,#0c70c0 100%);box-shadow:inset 0 0 0 1px #1c3e66,0 0 0 1px rgba(225,238,250,.85)"></div>
<svg style="left:16px;top:9px" width="23.500" height="23.500" viewBox="-1 0 22 22"><path d="M1.500 4.500C4.500 2.500 7.500 2.500 10 4L8.700 10C6 8.500 3.500 8.800 0.500 10.500Z" fill="#f0582a"/><path d="M11.500 4.500C14 6 17 6 20.500 4L19 10C16 12 13 11.800 10.200 10.500Z" fill="#8cc63e"/><path d="M0 12C3 10.200 6 10.200 8.500 11.500L7 17.500C4.500 16.200 2 16.300 -1 18Z" fill="#3ca0e0"/><path d="M10 12.200C12.500 13.500 15.500 13.500 18.700 11.500L17.200 17.500C14.500 19.500 11.500 19.300 8.500 18Z" fill="#fcc82c"/></svg>
<!-- task button 1 -->
<div class="a" style="left:59px;top:1px;width:60px;height:38px;border:1px solid #6c7f98;border-radius:3px;background:linear-gradient(180deg,rgba(255,255,255,.42),rgba(255,255,255,.18) 50%,rgba(255,255,255,.1));box-shadow:inset 0 0 0 1px rgba(255,255,255,.55)"></div>
<div class="a" style="left:75px;top:6px;width:28px;height:28px;border-radius:50%;background:#2ba3e6"></div>
<svg style="left:75px;top:6px" width="28" height="28" viewBox="0 0 28 28"><circle cx="14" cy="14" r="6.800" fill="#fff"/><path d="M4.500 23.500C7 16 16 7 23.500 4.500C21 12 12 21 4.500 23.500Z" fill="#fff"/></svg>
<!-- task button 2 (active) -->
<div class="a" style="left:121px;top:1px;width:60px;height:38px;border:1px solid #7c8da4;border-radius:3px;background:linear-gradient(180deg,rgba(255,255,255,.8),rgba(255,255,255,.55) 50%,rgba(255,255,255,.45));box-shadow:inset 0 0 0 1px rgba(255,255,255,.8)"></div>
<div class="a" style="left:137px;top:5px;width:28px;height:28px;background:#1b1b3a;border:2.500px solid #4fc4f2;box-shadow:0 1px 2px rgba(0,0,0,.4)"></div>
<div class="t" style="left:142px;top:11px;font-size:16px;font-weight:bold;color:#4fc0f0;letter-spacing:-0.300px;font-family:'Liberation Sans',sans-serif">Ps</div>
<!-- tray -->
<div class="a" style="left:0;top:1px;width:1600px;height:39px">
<div class="t" style="left:1302px;top:12px;font-family:'Liberation Mono',monospace;font-size:12px;color:#fff;transform:scaleX(.9);transform-origin:0 0">CH</div>
<svg style="left:1324px;top:8px" width="17" height="18" viewBox="0 0 17 18"><path d="M1 2.500L15 0.500L16.500 15L2.500 17.500Z" fill="#f0642c"/></svg>
<div class="t" style="left:1327px;top:8px;font-size:16px;font-weight:bold;font-style:italic;color:#fff;font-family:'Liberation Sans',sans-serif;transform:rotate(-6deg)">S</div>
<div class="a" style="left:1346px;top:10px;width:16px;height:16px;border-radius:50%;background:radial-gradient(circle at 45% 35%,#3848d8,#0c1490 70%,#080c60);box-shadow:0 0 0 1px #aab4c8"></div>
<div class="t" style="left:1350px;top:11px;font-size:13px;font-weight:bold;color:#fff;font-family:'Liberation Sans',sans-serif">?</div>
<svg style="left:1371px;top:8px" width="11" height="8" viewBox="0 0 11 8"><rect x="3.500" y="0.700" width="6.500" height="4" fill="none" stroke="#fff" stroke-width="1.300"/><rect x="0.700" y="3" width="6.500" height="4" fill="#8aa8c8" stroke="#fff" stroke-width="1.300"/></svg>
<svg style="left:1373px;top:21px" width="7" height="4" viewBox="0 0 7 4"><path d="M0 0H7L3.500 4Z" fill="#fff"/></svg>
<div class="a" style="left:1391px;top:12px;width:15px;height:14px;background:linear-gradient(#c81414,#900808);border:1px solid #700"></div>
<div class="t" style="left:1394px;top:14px;font-size:10px;font-weight:bold;color:#fff;font-family:'Liberation Sans',sans-serif">A</div>
<div class="a" style="left:1400px;top:15px;width:3px;height:8px;background:#fff"></div>
<svg style="left:1414px;top:11px" width="16" height="18" viewBox="0 0 16 18"><path d="M8 0.500L15.500 3V9C15.500 13 12 16 8 17.500C4 16 0.500 13 0.500 9V3Z" fill="#e8f0e0" stroke="#9ab" stroke-width="0.600"/><path d="M8 2.500L13.500 4.300V9C13.500 12 11 14.200 8 15.500C5 14.200 2.500 12 2.500 9V4.300Z" fill="#3ca83c"/><path d="M9.500 4L5.500 9.500H8L6.500 13.500L11 8H8.300Z" fill="#fff"/></svg>
<div class="a" style="left:1438px;top:12px;width:17px;height:17px;border-radius:50%;background:conic-gradient(#e8e020 0 40%,#3aa838 40% 60%,#e8e020 60% 85%,#3aa838 85%)"></div>
<div class="a" style="left:1441px;top:19px;width:11px;height:3px;background:#107810"></div>
<div class="a" style="left:1445px;top:15px;width:3px;height:11px;background:#107810"></div>
<svg style="left:1461px;top:11px" width="18" height="18" viewBox="0 0 18 18"><rect x="5.500" y="4.500" width="11" height="8.500" fill="#9ab0c8" stroke="#fff" stroke-width="1.300"/><path d="M8 16.500H14M11 13V16.500" stroke="#fff" stroke-width="1.400"/><rect x="1" y="1" width="4" height="5" fill="#fff" stroke="#555" stroke-width="0.700"/><path d="M3 6V14H6" fill="none" stroke="#fff" stroke-width="1.400"/></svg>
<svg style="left:1487px;top:11px" width="17" height="18" viewBox="0 0 17 18"><path d="M1 6H4L9 1V17L4 12H1Z" fill="#e8eef4" stroke="#fff" stroke-width="0.800"/><path d="M11.500 5.500C13 7.500 13 10.500 11.500 12.500" fill="none" stroke="#fff" stroke-width="1.200"/></svg>
<div class="t" style="left:1533px;top:5px;font-size:12px;color:#fff;font-family:'Liberation Sans',sans-serif">10:59</div>
<div class="t" style="left:1519px;top:23px;font-size:12px;color:#fff;letter-spacing:.45px;font-family:'Liberation Sans',sans-serif">2016/5/14</div>
</div>
<div class="a" style="left:1586px;top:1px;width:14px;height:39px;border-left:1px solid #5a708c;background:linear-gradient(90deg,rgba(255,255,255,.55),rgba(255,255,255,.2));box-shadow:inset 1px 0 0 rgba(255,255,255,.6)"></div>

</div>
<!-- green widget -->
<div class="a" style="left:1485px;top:707px;width:83px;height:90px;border-radius:10px;background:radial-gradient(circle at 20% 30%,rgba(255,255,255,.4),rgba(255,255,255,0) 40%),radial-gradient(circle at 75% 85%,rgba(255,255,255,.35),rgba(255,255,255,0) 35%),radial-gradient(circle at 85% 25%,rgba(255,255,255,.28),rgba(255,255,255,0) 30%),linear-gradient(135deg,#a6e878 0,#84da44 35%,#70cc2c 70%,#98e05c 100%);border:2px solid #b8f292;overflow:hidden">
<svg style="left:0;top:0" width="79" height="86" viewBox="0 0 79 86"><filter id="wt" x="0" y="0" width="1" height="1"><feTurbulence type="fractalNoise" baseFrequency="0.09" numOctaves="3" seed="5"/><feColorMatrix type="matrix" values="0 0 0 0 1  0 0 0 0 1  0 0 0 0 1  1.6 0 0 0 -0.55"/></filter><rect width="79" height="86" filter="url(#wt)" opacity=".55"/>
<g fill="none" stroke="#3a9a12" stroke-width="1.100" opacity=".85"><path d="M10 32C25 22 40 26 52 33C38 38 24 40 10 32Z"/><path d="M10 32H52L79 22"/><path d="M42 5C55 8 62 18 66 30C54 24 46 16 42 5Z"/><path d="M66 30L79 50M52 33C48 45 40 55 34 70"/><path d="M72 6C68 14 70 24 78 30"/><path d="M58 52C66 46 74 46 79 50C72 56 64 56 58 52Z"/><path d="M60 70C66 62 74 62 79 66C72 74 64 74 60 70Z"/><path d="M36 62C40 52 50 48 56 50C52 58 44 62 36 62Z"/></g><g fill="rgba(255,255,255,.22)" stroke="rgba(255,255,255,.5)" stroke-width="0.800"><path d="M6 4C12 10 12 24 6 32C0 24 0 10 6 4Z"/><path d="M22 2C28 10 26 22 20 28C16 20 16 10 22 2Z"/><path d="M2 40C8 46 8 58 4 64Z"/></g></svg>
<div class="t" style="left:11px;top:33px;font-size:23px;color:#fff;line-height:24px;white-space:pre">简
英设</div>
</div>
<!-- green circle -->
<div class="a" style="left:1581px;top:783px;width:46px;height:46px;border-radius:50%;background:radial-gradient(circle at 40% 30%,#6ad888,#30b458 60%,#249848);border:2px solid #f4f8f4;box-shadow:0 0 0 1px #4a6a54"></div>
<div class="t" style="left:1586px;top:799px;font-size:12px;font-weight:bold;color:#fff;font-family:'Liberation Sans',sans-serif">67</div>

</body>
</html>
